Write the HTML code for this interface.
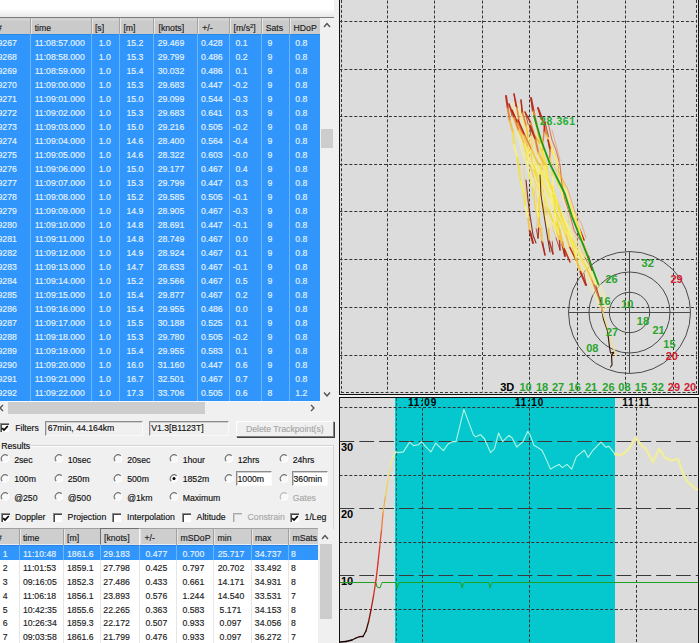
<!DOCTYPE html>
<html><head><meta charset="utf-8"><style>
html,body{margin:0;padding:0;}
body{width:700px;height:643px;position:relative;overflow:hidden;background:#f0f0f0;font-family:"Liberation Sans", sans-serif;}
.r{position:absolute;box-sizing:content-box;}
.t{position:absolute;white-space:nowrap;line-height:14px;height:14px;-webkit-text-stroke:0.15px currentColor;}
sup{font-size:6px;vertical-align:top;position:relative;top:-2px;}
</style></head><body>
<div class="r" style="left:0px;top:0px;width:339px;height:643px;background:#f0f0f0;"></div>
<div class="r" style="left:0px;top:0px;width:334px;height:10px;background:#ffffff;"></div>
<div class="r" style="left:0px;top:10px;width:334px;height:7px;background:linear-gradient(#fbfbfb,#e9e9e9);"></div>
<div class="r" style="left:0px;top:17px;width:334px;height:1px;background:#7a7a7a;"></div>
<div class="r" style="left:0px;top:18px;width:320px;height:16px;background:#cacaca;"></div>
<div class="r" style="left:0px;top:18px;width:320px;height:3px;background:#d2d2d2;"></div>
<div class="r" style="left:30px;top:18px;width:1px;height:16px;background:#a4a4a4;"></div>
<div class="r" style="left:31px;top:18px;width:1px;height:16px;background:#e6e6e6;"></div>
<div class="r" style="left:91px;top:18px;width:1px;height:16px;background:#a4a4a4;"></div>
<div class="r" style="left:92px;top:18px;width:1px;height:16px;background:#e6e6e6;"></div>
<div class="r" style="left:119px;top:18px;width:1px;height:16px;background:#a4a4a4;"></div>
<div class="r" style="left:120px;top:18px;width:1px;height:16px;background:#e6e6e6;"></div>
<div class="r" style="left:153px;top:18px;width:1px;height:16px;background:#a4a4a4;"></div>
<div class="r" style="left:154px;top:18px;width:1px;height:16px;background:#e6e6e6;"></div>
<div class="r" style="left:197px;top:18px;width:1px;height:16px;background:#a4a4a4;"></div>
<div class="r" style="left:198px;top:18px;width:1px;height:16px;background:#e6e6e6;"></div>
<div class="r" style="left:229px;top:18px;width:1px;height:16px;background:#a4a4a4;"></div>
<div class="r" style="left:230px;top:18px;width:1px;height:16px;background:#e6e6e6;"></div>
<div class="r" style="left:261px;top:18px;width:1px;height:16px;background:#a4a4a4;"></div>
<div class="r" style="left:262px;top:18px;width:1px;height:16px;background:#e6e6e6;"></div>
<div class="r" style="left:289px;top:18px;width:1px;height:16px;background:#a4a4a4;"></div>
<div class="r" style="left:290px;top:18px;width:1px;height:16px;background:#e6e6e6;"></div>
<div class="t" style="left:-3px;top:20.80px;color:#1a1a1a;font-size:8.7px;">#</div>
<div class="t" style="left:34.7px;top:20.80px;color:#1a1a1a;font-size:8.7px;">time</div>
<div class="t" style="left:94.9px;top:20.80px;color:#1a1a1a;font-size:8.7px;">[s]</div>
<div class="t" style="left:123.4px;top:20.80px;color:#1a1a1a;font-size:8.7px;">[m]</div>
<div class="t" style="left:158.5px;top:20.80px;color:#1a1a1a;font-size:8.7px;">[knots]</div>
<div class="t" style="left:202.2px;top:20.80px;color:#1a1a1a;font-size:8.7px;">+/-</div>
<div class="t" style="left:233.6px;top:20.80px;color:#1a1a1a;font-size:8.7px;">[m/s<sup>2</sup>]</div>
<div class="t" style="left:265.7px;top:20.80px;color:#1a1a1a;font-size:8.7px;">Sats</div>
<div class="t" style="left:293.5px;top:20.80px;color:#1a1a1a;font-size:8.7px;">HDoP</div>
<div class="r" style="left:0px;top:34px;width:320px;height:367px;background:#3196fc;"></div>
<div class="r" style="left:0px;top:34px;width:320px;height:1px;background:#2b86e6;"></div>
<div class="r" style="left:30px;top:34px;width:1px;height:367px;background:#6cb5ff;"></div>
<div class="r" style="left:91px;top:34px;width:1px;height:367px;background:#6cb5ff;"></div>
<div class="r" style="left:119px;top:34px;width:1px;height:367px;background:#6cb5ff;"></div>
<div class="r" style="left:153px;top:34px;width:1px;height:367px;background:#6cb5ff;"></div>
<div class="r" style="left:197px;top:34px;width:1px;height:367px;background:#6cb5ff;"></div>
<div class="r" style="left:229px;top:34px;width:1px;height:367px;background:#6cb5ff;"></div>
<div class="r" style="left:261px;top:34px;width:1px;height:367px;background:#6cb5ff;"></div>
<div class="r" style="left:289px;top:34px;width:1px;height:367px;background:#6cb5ff;"></div>
<div class="t" style="right:683.2px;top:35.60px;color:#e6f3ff;font-size:8.7px;">9267</div>
<div class="t" style="left:34.7px;top:35.60px;color:#e6f3ff;font-size:8.7px;">11:08:57.000</div>
<div class="t" style="left:98.7px;top:35.60px;color:#e6f3ff;font-size:8.7px;">1.0</div>
<div class="t" style="left:126.4px;top:35.60px;color:#e6f3ff;font-size:8.7px;">15.2</div>
<div class="t" style="left:157.7px;top:35.60px;color:#e6f3ff;font-size:8.7px;">29.469</div>
<div class="t" style="left:200.9px;top:35.60px;color:#e6f3ff;font-size:8.7px;">0.428</div>
<div class="t" style="left:235.4px;top:35.60px;color:#e6f3ff;font-size:8.7px;">0.1</div>
<div class="t" style="left:267.5px;top:35.60px;color:#e6f3ff;font-size:8.7px;">9</div>
<div class="t" style="left:295.3px;top:35.60px;color:#e6f3ff;font-size:8.7px;">0.8</div>
<div class="t" style="right:683.2px;top:49.60px;color:#e6f3ff;font-size:8.7px;">9268</div>
<div class="t" style="left:34.7px;top:49.60px;color:#e6f3ff;font-size:8.7px;">11:08:58.000</div>
<div class="t" style="left:98.7px;top:49.60px;color:#e6f3ff;font-size:8.7px;">1.0</div>
<div class="t" style="left:126.4px;top:49.60px;color:#e6f3ff;font-size:8.7px;">15.3</div>
<div class="t" style="left:157.7px;top:49.60px;color:#e6f3ff;font-size:8.7px;">29.799</div>
<div class="t" style="left:200.9px;top:49.60px;color:#e6f3ff;font-size:8.7px;">0.486</div>
<div class="t" style="left:235.4px;top:49.60px;color:#e6f3ff;font-size:8.7px;">0.2</div>
<div class="t" style="left:267.5px;top:49.60px;color:#e6f3ff;font-size:8.7px;">9</div>
<div class="t" style="left:295.3px;top:49.60px;color:#e6f3ff;font-size:8.7px;">0.8</div>
<div class="t" style="right:683.2px;top:63.60px;color:#e6f3ff;font-size:8.7px;">9269</div>
<div class="t" style="left:34.7px;top:63.60px;color:#e6f3ff;font-size:8.7px;">11:08:59.000</div>
<div class="t" style="left:98.7px;top:63.60px;color:#e6f3ff;font-size:8.7px;">1.0</div>
<div class="t" style="left:126.4px;top:63.60px;color:#e6f3ff;font-size:8.7px;">15.4</div>
<div class="t" style="left:157.7px;top:63.60px;color:#e6f3ff;font-size:8.7px;">30.032</div>
<div class="t" style="left:200.9px;top:63.60px;color:#e6f3ff;font-size:8.7px;">0.486</div>
<div class="t" style="left:235.4px;top:63.60px;color:#e6f3ff;font-size:8.7px;">0.1</div>
<div class="t" style="left:267.5px;top:63.60px;color:#e6f3ff;font-size:8.7px;">9</div>
<div class="t" style="left:295.3px;top:63.60px;color:#e6f3ff;font-size:8.7px;">0.8</div>
<div class="t" style="right:683.2px;top:77.60px;color:#e6f3ff;font-size:8.7px;">9270</div>
<div class="t" style="left:34.7px;top:77.60px;color:#e6f3ff;font-size:8.7px;">11:09:00.000</div>
<div class="t" style="left:98.7px;top:77.60px;color:#e6f3ff;font-size:8.7px;">1.0</div>
<div class="t" style="left:126.4px;top:77.60px;color:#e6f3ff;font-size:8.7px;">15.3</div>
<div class="t" style="left:157.7px;top:77.60px;color:#e6f3ff;font-size:8.7px;">29.683</div>
<div class="t" style="left:200.9px;top:77.60px;color:#e6f3ff;font-size:8.7px;">0.447</div>
<div class="t" style="right:464.4px;top:77.60px;color:#e6f3ff;font-size:8.7px;">-</div>
<div class="t" style="left:235.4px;top:77.60px;color:#e6f3ff;font-size:8.7px;">0.2</div>
<div class="t" style="left:267.5px;top:77.60px;color:#e6f3ff;font-size:8.7px;">9</div>
<div class="t" style="left:295.3px;top:77.60px;color:#e6f3ff;font-size:8.7px;">0.8</div>
<div class="t" style="right:683.2px;top:91.60px;color:#e6f3ff;font-size:8.7px;">9271</div>
<div class="t" style="left:34.7px;top:91.60px;color:#e6f3ff;font-size:8.7px;">11:09:01.000</div>
<div class="t" style="left:98.7px;top:91.60px;color:#e6f3ff;font-size:8.7px;">1.0</div>
<div class="t" style="left:126.4px;top:91.60px;color:#e6f3ff;font-size:8.7px;">15.0</div>
<div class="t" style="left:157.7px;top:91.60px;color:#e6f3ff;font-size:8.7px;">29.099</div>
<div class="t" style="left:200.9px;top:91.60px;color:#e6f3ff;font-size:8.7px;">0.544</div>
<div class="t" style="right:464.4px;top:91.60px;color:#e6f3ff;font-size:8.7px;">-</div>
<div class="t" style="left:235.4px;top:91.60px;color:#e6f3ff;font-size:8.7px;">0.3</div>
<div class="t" style="left:267.5px;top:91.60px;color:#e6f3ff;font-size:8.7px;">9</div>
<div class="t" style="left:295.3px;top:91.60px;color:#e6f3ff;font-size:8.7px;">0.8</div>
<div class="t" style="right:683.2px;top:105.60px;color:#e6f3ff;font-size:8.7px;">9272</div>
<div class="t" style="left:34.7px;top:105.60px;color:#e6f3ff;font-size:8.7px;">11:09:02.000</div>
<div class="t" style="left:98.7px;top:105.60px;color:#e6f3ff;font-size:8.7px;">1.0</div>
<div class="t" style="left:126.4px;top:105.60px;color:#e6f3ff;font-size:8.7px;">15.3</div>
<div class="t" style="left:157.7px;top:105.60px;color:#e6f3ff;font-size:8.7px;">29.683</div>
<div class="t" style="left:200.9px;top:105.60px;color:#e6f3ff;font-size:8.7px;">0.641</div>
<div class="t" style="left:235.4px;top:105.60px;color:#e6f3ff;font-size:8.7px;">0.3</div>
<div class="t" style="left:267.5px;top:105.60px;color:#e6f3ff;font-size:8.7px;">9</div>
<div class="t" style="left:295.3px;top:105.60px;color:#e6f3ff;font-size:8.7px;">0.8</div>
<div class="t" style="right:683.2px;top:119.60px;color:#e6f3ff;font-size:8.7px;">9273</div>
<div class="t" style="left:34.7px;top:119.60px;color:#e6f3ff;font-size:8.7px;">11:09:03.000</div>
<div class="t" style="left:98.7px;top:119.60px;color:#e6f3ff;font-size:8.7px;">1.0</div>
<div class="t" style="left:126.4px;top:119.60px;color:#e6f3ff;font-size:8.7px;">15.0</div>
<div class="t" style="left:157.7px;top:119.60px;color:#e6f3ff;font-size:8.7px;">29.216</div>
<div class="t" style="left:200.9px;top:119.60px;color:#e6f3ff;font-size:8.7px;">0.505</div>
<div class="t" style="right:464.4px;top:119.60px;color:#e6f3ff;font-size:8.7px;">-</div>
<div class="t" style="left:235.4px;top:119.60px;color:#e6f3ff;font-size:8.7px;">0.2</div>
<div class="t" style="left:267.5px;top:119.60px;color:#e6f3ff;font-size:8.7px;">9</div>
<div class="t" style="left:295.3px;top:119.60px;color:#e6f3ff;font-size:8.7px;">0.8</div>
<div class="t" style="right:683.2px;top:133.60px;color:#e6f3ff;font-size:8.7px;">9274</div>
<div class="t" style="left:34.7px;top:133.60px;color:#e6f3ff;font-size:8.7px;">11:09:04.000</div>
<div class="t" style="left:98.7px;top:133.60px;color:#e6f3ff;font-size:8.7px;">1.0</div>
<div class="t" style="left:126.4px;top:133.60px;color:#e6f3ff;font-size:8.7px;">14.6</div>
<div class="t" style="left:157.7px;top:133.60px;color:#e6f3ff;font-size:8.7px;">28.400</div>
<div class="t" style="left:200.9px;top:133.60px;color:#e6f3ff;font-size:8.7px;">0.564</div>
<div class="t" style="right:464.4px;top:133.60px;color:#e6f3ff;font-size:8.7px;">-</div>
<div class="t" style="left:235.4px;top:133.60px;color:#e6f3ff;font-size:8.7px;">0.4</div>
<div class="t" style="left:267.5px;top:133.60px;color:#e6f3ff;font-size:8.7px;">9</div>
<div class="t" style="left:295.3px;top:133.60px;color:#e6f3ff;font-size:8.7px;">0.8</div>
<div class="t" style="right:683.2px;top:147.60px;color:#e6f3ff;font-size:8.7px;">9275</div>
<div class="t" style="left:34.7px;top:147.60px;color:#e6f3ff;font-size:8.7px;">11:09:05.000</div>
<div class="t" style="left:98.7px;top:147.60px;color:#e6f3ff;font-size:8.7px;">1.0</div>
<div class="t" style="left:126.4px;top:147.60px;color:#e6f3ff;font-size:8.7px;">14.6</div>
<div class="t" style="left:157.7px;top:147.60px;color:#e6f3ff;font-size:8.7px;">28.322</div>
<div class="t" style="left:200.9px;top:147.60px;color:#e6f3ff;font-size:8.7px;">0.603</div>
<div class="t" style="right:464.4px;top:147.60px;color:#e6f3ff;font-size:8.7px;">-</div>
<div class="t" style="left:235.4px;top:147.60px;color:#e6f3ff;font-size:8.7px;">0.0</div>
<div class="t" style="left:267.5px;top:147.60px;color:#e6f3ff;font-size:8.7px;">9</div>
<div class="t" style="left:295.3px;top:147.60px;color:#e6f3ff;font-size:8.7px;">0.8</div>
<div class="t" style="right:683.2px;top:161.60px;color:#e6f3ff;font-size:8.7px;">9276</div>
<div class="t" style="left:34.7px;top:161.60px;color:#e6f3ff;font-size:8.7px;">11:09:06.000</div>
<div class="t" style="left:98.7px;top:161.60px;color:#e6f3ff;font-size:8.7px;">1.0</div>
<div class="t" style="left:126.4px;top:161.60px;color:#e6f3ff;font-size:8.7px;">15.0</div>
<div class="t" style="left:157.7px;top:161.60px;color:#e6f3ff;font-size:8.7px;">29.177</div>
<div class="t" style="left:200.9px;top:161.60px;color:#e6f3ff;font-size:8.7px;">0.467</div>
<div class="t" style="left:235.4px;top:161.60px;color:#e6f3ff;font-size:8.7px;">0.4</div>
<div class="t" style="left:267.5px;top:161.60px;color:#e6f3ff;font-size:8.7px;">9</div>
<div class="t" style="left:295.3px;top:161.60px;color:#e6f3ff;font-size:8.7px;">0.8</div>
<div class="t" style="right:683.2px;top:175.60px;color:#e6f3ff;font-size:8.7px;">9277</div>
<div class="t" style="left:34.7px;top:175.60px;color:#e6f3ff;font-size:8.7px;">11:09:07.000</div>
<div class="t" style="left:98.7px;top:175.60px;color:#e6f3ff;font-size:8.7px;">1.0</div>
<div class="t" style="left:126.4px;top:175.60px;color:#e6f3ff;font-size:8.7px;">15.3</div>
<div class="t" style="left:157.7px;top:175.60px;color:#e6f3ff;font-size:8.7px;">29.799</div>
<div class="t" style="left:200.9px;top:175.60px;color:#e6f3ff;font-size:8.7px;">0.447</div>
<div class="t" style="left:235.4px;top:175.60px;color:#e6f3ff;font-size:8.7px;">0.3</div>
<div class="t" style="left:267.5px;top:175.60px;color:#e6f3ff;font-size:8.7px;">9</div>
<div class="t" style="left:295.3px;top:175.60px;color:#e6f3ff;font-size:8.7px;">0.8</div>
<div class="t" style="right:683.2px;top:189.60px;color:#e6f3ff;font-size:8.7px;">9278</div>
<div class="t" style="left:34.7px;top:189.60px;color:#e6f3ff;font-size:8.7px;">11:09:08.000</div>
<div class="t" style="left:98.7px;top:189.60px;color:#e6f3ff;font-size:8.7px;">1.0</div>
<div class="t" style="left:126.4px;top:189.60px;color:#e6f3ff;font-size:8.7px;">15.2</div>
<div class="t" style="left:157.7px;top:189.60px;color:#e6f3ff;font-size:8.7px;">29.585</div>
<div class="t" style="left:200.9px;top:189.60px;color:#e6f3ff;font-size:8.7px;">0.505</div>
<div class="t" style="right:464.4px;top:189.60px;color:#e6f3ff;font-size:8.7px;">-</div>
<div class="t" style="left:235.4px;top:189.60px;color:#e6f3ff;font-size:8.7px;">0.1</div>
<div class="t" style="left:267.5px;top:189.60px;color:#e6f3ff;font-size:8.7px;">9</div>
<div class="t" style="left:295.3px;top:189.60px;color:#e6f3ff;font-size:8.7px;">0.8</div>
<div class="t" style="right:683.2px;top:203.60px;color:#e6f3ff;font-size:8.7px;">9279</div>
<div class="t" style="left:34.7px;top:203.60px;color:#e6f3ff;font-size:8.7px;">11:09:09.000</div>
<div class="t" style="left:98.7px;top:203.60px;color:#e6f3ff;font-size:8.7px;">1.0</div>
<div class="t" style="left:126.4px;top:203.60px;color:#e6f3ff;font-size:8.7px;">14.9</div>
<div class="t" style="left:157.7px;top:203.60px;color:#e6f3ff;font-size:8.7px;">28.905</div>
<div class="t" style="left:200.9px;top:203.60px;color:#e6f3ff;font-size:8.7px;">0.467</div>
<div class="t" style="right:464.4px;top:203.60px;color:#e6f3ff;font-size:8.7px;">-</div>
<div class="t" style="left:235.4px;top:203.60px;color:#e6f3ff;font-size:8.7px;">0.3</div>
<div class="t" style="left:267.5px;top:203.60px;color:#e6f3ff;font-size:8.7px;">9</div>
<div class="t" style="left:295.3px;top:203.60px;color:#e6f3ff;font-size:8.7px;">0.8</div>
<div class="t" style="right:683.2px;top:217.60px;color:#e6f3ff;font-size:8.7px;">9280</div>
<div class="t" style="left:34.7px;top:217.60px;color:#e6f3ff;font-size:8.7px;">11:09:10.000</div>
<div class="t" style="left:98.7px;top:217.60px;color:#e6f3ff;font-size:8.7px;">1.0</div>
<div class="t" style="left:126.4px;top:217.60px;color:#e6f3ff;font-size:8.7px;">14.8</div>
<div class="t" style="left:157.7px;top:217.60px;color:#e6f3ff;font-size:8.7px;">28.691</div>
<div class="t" style="left:200.9px;top:217.60px;color:#e6f3ff;font-size:8.7px;">0.447</div>
<div class="t" style="right:464.4px;top:217.60px;color:#e6f3ff;font-size:8.7px;">-</div>
<div class="t" style="left:235.4px;top:217.60px;color:#e6f3ff;font-size:8.7px;">0.1</div>
<div class="t" style="left:267.5px;top:217.60px;color:#e6f3ff;font-size:8.7px;">9</div>
<div class="t" style="left:295.3px;top:217.60px;color:#e6f3ff;font-size:8.7px;">0.8</div>
<div class="t" style="right:683.2px;top:231.60px;color:#e6f3ff;font-size:8.7px;">9281</div>
<div class="t" style="left:34.7px;top:231.60px;color:#e6f3ff;font-size:8.7px;">11:09:11.000</div>
<div class="t" style="left:98.7px;top:231.60px;color:#e6f3ff;font-size:8.7px;">1.0</div>
<div class="t" style="left:126.4px;top:231.60px;color:#e6f3ff;font-size:8.7px;">14.8</div>
<div class="t" style="left:157.7px;top:231.60px;color:#e6f3ff;font-size:8.7px;">28.749</div>
<div class="t" style="left:200.9px;top:231.60px;color:#e6f3ff;font-size:8.7px;">0.467</div>
<div class="t" style="left:235.4px;top:231.60px;color:#e6f3ff;font-size:8.7px;">0.0</div>
<div class="t" style="left:267.5px;top:231.60px;color:#e6f3ff;font-size:8.7px;">9</div>
<div class="t" style="left:295.3px;top:231.60px;color:#e6f3ff;font-size:8.7px;">0.8</div>
<div class="t" style="right:683.2px;top:245.60px;color:#e6f3ff;font-size:8.7px;">9282</div>
<div class="t" style="left:34.7px;top:245.60px;color:#e6f3ff;font-size:8.7px;">11:09:12.000</div>
<div class="t" style="left:98.7px;top:245.60px;color:#e6f3ff;font-size:8.7px;">1.0</div>
<div class="t" style="left:126.4px;top:245.60px;color:#e6f3ff;font-size:8.7px;">14.9</div>
<div class="t" style="left:157.7px;top:245.60px;color:#e6f3ff;font-size:8.7px;">28.924</div>
<div class="t" style="left:200.9px;top:245.60px;color:#e6f3ff;font-size:8.7px;">0.467</div>
<div class="t" style="left:235.4px;top:245.60px;color:#e6f3ff;font-size:8.7px;">0.1</div>
<div class="t" style="left:267.5px;top:245.60px;color:#e6f3ff;font-size:8.7px;">9</div>
<div class="t" style="left:295.3px;top:245.60px;color:#e6f3ff;font-size:8.7px;">0.8</div>
<div class="t" style="right:683.2px;top:259.60px;color:#e6f3ff;font-size:8.7px;">9283</div>
<div class="t" style="left:34.7px;top:259.60px;color:#e6f3ff;font-size:8.7px;">11:09:13.000</div>
<div class="t" style="left:98.7px;top:259.60px;color:#e6f3ff;font-size:8.7px;">1.0</div>
<div class="t" style="left:126.4px;top:259.60px;color:#e6f3ff;font-size:8.7px;">14.7</div>
<div class="t" style="left:157.7px;top:259.60px;color:#e6f3ff;font-size:8.7px;">28.633</div>
<div class="t" style="left:200.9px;top:259.60px;color:#e6f3ff;font-size:8.7px;">0.467</div>
<div class="t" style="right:464.4px;top:259.60px;color:#e6f3ff;font-size:8.7px;">-</div>
<div class="t" style="left:235.4px;top:259.60px;color:#e6f3ff;font-size:8.7px;">0.1</div>
<div class="t" style="left:267.5px;top:259.60px;color:#e6f3ff;font-size:8.7px;">9</div>
<div class="t" style="left:295.3px;top:259.60px;color:#e6f3ff;font-size:8.7px;">0.8</div>
<div class="t" style="right:683.2px;top:273.60px;color:#e6f3ff;font-size:8.7px;">9284</div>
<div class="t" style="left:34.7px;top:273.60px;color:#e6f3ff;font-size:8.7px;">11:09:14.000</div>
<div class="t" style="left:98.7px;top:273.60px;color:#e6f3ff;font-size:8.7px;">1.0</div>
<div class="t" style="left:126.4px;top:273.60px;color:#e6f3ff;font-size:8.7px;">15.2</div>
<div class="t" style="left:157.7px;top:273.60px;color:#e6f3ff;font-size:8.7px;">29.566</div>
<div class="t" style="left:200.9px;top:273.60px;color:#e6f3ff;font-size:8.7px;">0.467</div>
<div class="t" style="left:235.4px;top:273.60px;color:#e6f3ff;font-size:8.7px;">0.5</div>
<div class="t" style="left:267.5px;top:273.60px;color:#e6f3ff;font-size:8.7px;">9</div>
<div class="t" style="left:295.3px;top:273.60px;color:#e6f3ff;font-size:8.7px;">0.8</div>
<div class="t" style="right:683.2px;top:287.60px;color:#e6f3ff;font-size:8.7px;">9285</div>
<div class="t" style="left:34.7px;top:287.60px;color:#e6f3ff;font-size:8.7px;">11:09:15.000</div>
<div class="t" style="left:98.7px;top:287.60px;color:#e6f3ff;font-size:8.7px;">1.0</div>
<div class="t" style="left:126.4px;top:287.60px;color:#e6f3ff;font-size:8.7px;">15.4</div>
<div class="t" style="left:157.7px;top:287.60px;color:#e6f3ff;font-size:8.7px;">29.877</div>
<div class="t" style="left:200.9px;top:287.60px;color:#e6f3ff;font-size:8.7px;">0.467</div>
<div class="t" style="left:235.4px;top:287.60px;color:#e6f3ff;font-size:8.7px;">0.2</div>
<div class="t" style="left:267.5px;top:287.60px;color:#e6f3ff;font-size:8.7px;">9</div>
<div class="t" style="left:295.3px;top:287.60px;color:#e6f3ff;font-size:8.7px;">0.8</div>
<div class="t" style="right:683.2px;top:301.60px;color:#e6f3ff;font-size:8.7px;">9286</div>
<div class="t" style="left:34.7px;top:301.60px;color:#e6f3ff;font-size:8.7px;">11:09:16.000</div>
<div class="t" style="left:98.7px;top:301.60px;color:#e6f3ff;font-size:8.7px;">1.0</div>
<div class="t" style="left:126.4px;top:301.60px;color:#e6f3ff;font-size:8.7px;">15.4</div>
<div class="t" style="left:157.7px;top:301.60px;color:#e6f3ff;font-size:8.7px;">29.955</div>
<div class="t" style="left:200.9px;top:301.60px;color:#e6f3ff;font-size:8.7px;">0.486</div>
<div class="t" style="left:235.4px;top:301.60px;color:#e6f3ff;font-size:8.7px;">0.0</div>
<div class="t" style="left:267.5px;top:301.60px;color:#e6f3ff;font-size:8.7px;">9</div>
<div class="t" style="left:295.3px;top:301.60px;color:#e6f3ff;font-size:8.7px;">0.8</div>
<div class="t" style="right:683.2px;top:315.60px;color:#e6f3ff;font-size:8.7px;">9287</div>
<div class="t" style="left:34.7px;top:315.60px;color:#e6f3ff;font-size:8.7px;">11:09:17.000</div>
<div class="t" style="left:98.7px;top:315.60px;color:#e6f3ff;font-size:8.7px;">1.0</div>
<div class="t" style="left:126.4px;top:315.60px;color:#e6f3ff;font-size:8.7px;">15.5</div>
<div class="t" style="left:157.7px;top:315.60px;color:#e6f3ff;font-size:8.7px;">30.188</div>
<div class="t" style="left:200.9px;top:315.60px;color:#e6f3ff;font-size:8.7px;">0.525</div>
<div class="t" style="left:235.4px;top:315.60px;color:#e6f3ff;font-size:8.7px;">0.1</div>
<div class="t" style="left:267.5px;top:315.60px;color:#e6f3ff;font-size:8.7px;">9</div>
<div class="t" style="left:295.3px;top:315.60px;color:#e6f3ff;font-size:8.7px;">0.8</div>
<div class="t" style="right:683.2px;top:329.60px;color:#e6f3ff;font-size:8.7px;">9288</div>
<div class="t" style="left:34.7px;top:329.60px;color:#e6f3ff;font-size:8.7px;">11:09:18.000</div>
<div class="t" style="left:98.7px;top:329.60px;color:#e6f3ff;font-size:8.7px;">1.0</div>
<div class="t" style="left:126.4px;top:329.60px;color:#e6f3ff;font-size:8.7px;">15.3</div>
<div class="t" style="left:157.7px;top:329.60px;color:#e6f3ff;font-size:8.7px;">29.780</div>
<div class="t" style="left:200.9px;top:329.60px;color:#e6f3ff;font-size:8.7px;">0.505</div>
<div class="t" style="right:464.4px;top:329.60px;color:#e6f3ff;font-size:8.7px;">-</div>
<div class="t" style="left:235.4px;top:329.60px;color:#e6f3ff;font-size:8.7px;">0.2</div>
<div class="t" style="left:267.5px;top:329.60px;color:#e6f3ff;font-size:8.7px;">9</div>
<div class="t" style="left:295.3px;top:329.60px;color:#e6f3ff;font-size:8.7px;">0.8</div>
<div class="t" style="right:683.2px;top:343.60px;color:#e6f3ff;font-size:8.7px;">9289</div>
<div class="t" style="left:34.7px;top:343.60px;color:#e6f3ff;font-size:8.7px;">11:09:19.000</div>
<div class="t" style="left:98.7px;top:343.60px;color:#e6f3ff;font-size:8.7px;">1.0</div>
<div class="t" style="left:126.4px;top:343.60px;color:#e6f3ff;font-size:8.7px;">15.4</div>
<div class="t" style="left:157.7px;top:343.60px;color:#e6f3ff;font-size:8.7px;">29.955</div>
<div class="t" style="left:200.9px;top:343.60px;color:#e6f3ff;font-size:8.7px;">0.583</div>
<div class="t" style="left:235.4px;top:343.60px;color:#e6f3ff;font-size:8.7px;">0.1</div>
<div class="t" style="left:267.5px;top:343.60px;color:#e6f3ff;font-size:8.7px;">9</div>
<div class="t" style="left:295.3px;top:343.60px;color:#e6f3ff;font-size:8.7px;">0.8</div>
<div class="t" style="right:683.2px;top:357.60px;color:#e6f3ff;font-size:8.7px;">9290</div>
<div class="t" style="left:34.7px;top:357.60px;color:#e6f3ff;font-size:8.7px;">11:09:20.000</div>
<div class="t" style="left:98.7px;top:357.60px;color:#e6f3ff;font-size:8.7px;">1.0</div>
<div class="t" style="left:126.4px;top:357.60px;color:#e6f3ff;font-size:8.7px;">16.0</div>
<div class="t" style="left:157.7px;top:357.60px;color:#e6f3ff;font-size:8.7px;">31.160</div>
<div class="t" style="left:200.9px;top:357.60px;color:#e6f3ff;font-size:8.7px;">0.447</div>
<div class="t" style="left:235.4px;top:357.60px;color:#e6f3ff;font-size:8.7px;">0.6</div>
<div class="t" style="left:267.5px;top:357.60px;color:#e6f3ff;font-size:8.7px;">9</div>
<div class="t" style="left:295.3px;top:357.60px;color:#e6f3ff;font-size:8.7px;">0.8</div>
<div class="t" style="right:683.2px;top:371.60px;color:#e6f3ff;font-size:8.7px;">9291</div>
<div class="t" style="left:34.7px;top:371.60px;color:#e6f3ff;font-size:8.7px;">11:09:21.000</div>
<div class="t" style="left:98.7px;top:371.60px;color:#e6f3ff;font-size:8.7px;">1.0</div>
<div class="t" style="left:126.4px;top:371.60px;color:#e6f3ff;font-size:8.7px;">16.7</div>
<div class="t" style="left:157.7px;top:371.60px;color:#e6f3ff;font-size:8.7px;">32.501</div>
<div class="t" style="left:200.9px;top:371.60px;color:#e6f3ff;font-size:8.7px;">0.467</div>
<div class="t" style="left:235.4px;top:371.60px;color:#e6f3ff;font-size:8.7px;">0.7</div>
<div class="t" style="left:267.5px;top:371.60px;color:#e6f3ff;font-size:8.7px;">9</div>
<div class="t" style="left:295.3px;top:371.60px;color:#e6f3ff;font-size:8.7px;">0.8</div>
<div class="t" style="right:683.2px;top:385.60px;color:#e6f3ff;font-size:8.7px;">9292</div>
<div class="t" style="left:34.7px;top:385.60px;color:#e6f3ff;font-size:8.7px;">11:09:22.000</div>
<div class="t" style="left:98.7px;top:385.60px;color:#e6f3ff;font-size:8.7px;">1.0</div>
<div class="t" style="left:126.4px;top:385.60px;color:#e6f3ff;font-size:8.7px;">17.3</div>
<div class="t" style="left:157.7px;top:385.60px;color:#e6f3ff;font-size:8.7px;">33.706</div>
<div class="t" style="left:200.9px;top:385.60px;color:#e6f3ff;font-size:8.7px;">0.505</div>
<div class="t" style="left:235.4px;top:385.60px;color:#e6f3ff;font-size:8.7px;">0.6</div>
<div class="t" style="left:267.5px;top:385.60px;color:#e6f3ff;font-size:8.7px;">8</div>
<div class="t" style="left:295.3px;top:385.60px;color:#e6f3ff;font-size:8.7px;">1.2</div>
<div class="r" style="left:320px;top:18px;width:14px;height:383px;background:#f0f0f0;"></div>
<div class="r" style="left:321px;top:129px;width:12px;height:19px;background:#cdcdcd;"></div>
<svg class="r" style="left:320px;top:18px" width="14" height="383"><path d="M4 9 L7 5.5 L10 9" fill="none" stroke="#505050" stroke-width="1.3"/><path d="M4 374.5 L7 378 L10 374.5" fill="none" stroke="#505050" stroke-width="1.4"/></svg>
<div class="r" style="left:0px;top:401px;width:320px;height:14px;background:#f0f0f0;"></div>
<div class="r" style="left:0px;top:401px;width:320px;height:1px;background:#f4f8fc;"></div>
<div class="r" style="left:8px;top:402px;width:197px;height:12px;background:#cdcdcd;"></div>
<svg class="r" style="left:0px;top:401px" width="320" height="14"><path d="M3 4 L0 7 L3 10" fill="none" stroke="#505050" stroke-width="1.3"/><path d="M311 4 L314 7 L311 10" fill="none" stroke="#505050" stroke-width="1.3"/></svg>
<div class="r" style="left:-0.5px;top:422.5px;width:8px;height:8px;background:#ffffff;border-top:1px solid #8a8a8a;border-left:1px solid #8a8a8a;box-shadow:inset 1px 1px 0 #454545"></div>
<svg class="r" style="left:-0.5px;top:422.5px" width="10" height="10"><path d="M2.2 5.2 L4 7.1 L7.8 3" fill="none" stroke="#000" stroke-width="1.7"/></svg>
<div class="t" style="left:15.2px;top:420.80px;color:#111;font-size:8.7px;">Filters</div>
<div class="r" style="left:45px;top:421px;width:96px;height:13px;background:#f0f0f0;border-top:1px solid #8c8c8c;border-left:1px solid #8c8c8c;border-right:1px solid #fafafa;border-bottom:1px solid #fafafa;box-shadow:inset 1px 1px 0 #d0d0d0"></div>
<div class="t" style="left:47.7px;top:421.20px;color:#111;font-size:8.7px;">67min, 44.164km</div>
<div class="r" style="left:149px;top:421px;width:78px;height:13px;background:#f0f0f0;border-top:1px solid #8c8c8c;border-left:1px solid #8c8c8c;border-right:1px solid #fafafa;border-bottom:1px solid #fafafa;box-shadow:inset 1px 1px 0 #d0d0d0"></div>
<div class="t" style="left:151.2px;top:421.20px;color:#111;font-size:8.7px;">V1.3[B1123T]</div>
<div class="r" style="left:236px;top:421px;width:96px;height:14px;background:#f0f0f0;border-top:1px solid #fff;border-left:1px solid #fff;border-right:1px solid #808080;border-bottom:1px solid #808080;box-shadow:1px 1px 0 #404040"></div>
<div class="t" style="left:246px;top:421.50px;color:#a6a6a6;font-size:8.7px;">Delete Trackpoint(s)</div>
<div class="t" style="left:1.2px;top:439.00px;color:#111;font-size:8.7px;">Results</div>
<div class="r" style="left:30px;top:445px;width:303px;height:1px;background:#d5d5d5;"></div>
<div class="r" style="left:30px;top:446px;width:303px;height:1px;background:#ffffff;"></div>
<div class="r" style="left:333px;top:445px;width:1px;height:84px;background:#d5d5d5;"></div>
<svg class="r" style="left:0px;top:453.1px" width="11" height="11"><circle cx="5" cy="5.5" r="3.9" fill="#f8f8f8" stroke="#ffffff" stroke-width="1"/><path d="M2.2 8.2 A3.9 3.9 0 0 1 7.8 2.8" fill="none" stroke="#707070" stroke-width="1.1"/></svg>
<div class="t" style="left:14.2px;top:452.60px;color:#111;font-size:8.7px;">2sec</div>
<svg class="r" style="left:53.5px;top:453.1px" width="11" height="11"><circle cx="5" cy="5.5" r="3.9" fill="#f8f8f8" stroke="#ffffff" stroke-width="1"/><path d="M2.2 8.2 A3.9 3.9 0 0 1 7.8 2.8" fill="none" stroke="#707070" stroke-width="1.1"/></svg>
<div class="t" style="left:67.7px;top:452.60px;color:#111;font-size:8.7px;">10sec</div>
<svg class="r" style="left:113px;top:453.1px" width="11" height="11"><circle cx="5" cy="5.5" r="3.9" fill="#f8f8f8" stroke="#ffffff" stroke-width="1"/><path d="M2.2 8.2 A3.9 3.9 0 0 1 7.8 2.8" fill="none" stroke="#707070" stroke-width="1.1"/></svg>
<div class="t" style="left:127.2px;top:452.60px;color:#111;font-size:8.7px;">20sec</div>
<svg class="r" style="left:168.5px;top:453.1px" width="11" height="11"><circle cx="5" cy="5.5" r="3.9" fill="#f8f8f8" stroke="#ffffff" stroke-width="1"/><path d="M2.2 8.2 A3.9 3.9 0 0 1 7.8 2.8" fill="none" stroke="#707070" stroke-width="1.1"/></svg>
<div class="t" style="left:182.7px;top:452.60px;color:#111;font-size:8.7px;">1hour</div>
<svg class="r" style="left:223.5px;top:453.1px" width="11" height="11"><circle cx="5" cy="5.5" r="3.9" fill="#f8f8f8" stroke="#ffffff" stroke-width="1"/><path d="M2.2 8.2 A3.9 3.9 0 0 1 7.8 2.8" fill="none" stroke="#707070" stroke-width="1.1"/></svg>
<div class="t" style="left:237.7px;top:452.60px;color:#111;font-size:8.7px;">12hrs</div>
<svg class="r" style="left:278.5px;top:453.1px" width="11" height="11"><circle cx="5" cy="5.5" r="3.9" fill="#f8f8f8" stroke="#ffffff" stroke-width="1"/><path d="M2.2 8.2 A3.9 3.9 0 0 1 7.8 2.8" fill="none" stroke="#707070" stroke-width="1.1"/></svg>
<div class="t" style="left:292.7px;top:452.60px;color:#111;font-size:8.7px;">24hrs</div>
<svg class="r" style="left:0px;top:472.5px" width="11" height="11"><circle cx="5" cy="5.5" r="3.9" fill="#f8f8f8" stroke="#ffffff" stroke-width="1"/><path d="M2.2 8.2 A3.9 3.9 0 0 1 7.8 2.8" fill="none" stroke="#707070" stroke-width="1.1"/></svg>
<div class="t" style="left:14.2px;top:472.00px;color:#111;font-size:8.7px;">100m</div>
<svg class="r" style="left:53.5px;top:472.5px" width="11" height="11"><circle cx="5" cy="5.5" r="3.9" fill="#f8f8f8" stroke="#ffffff" stroke-width="1"/><path d="M2.2 8.2 A3.9 3.9 0 0 1 7.8 2.8" fill="none" stroke="#707070" stroke-width="1.1"/></svg>
<div class="t" style="left:67.7px;top:472.00px;color:#111;font-size:8.7px;">250m</div>
<svg class="r" style="left:113px;top:472.5px" width="11" height="11"><circle cx="5" cy="5.5" r="3.9" fill="#f8f8f8" stroke="#ffffff" stroke-width="1"/><path d="M2.2 8.2 A3.9 3.9 0 0 1 7.8 2.8" fill="none" stroke="#707070" stroke-width="1.1"/></svg>
<div class="t" style="left:127.2px;top:472.00px;color:#111;font-size:8.7px;">500m</div>
<svg class="r" style="left:168.5px;top:472.5px" width="11" height="11"><circle cx="5" cy="5.5" r="3.9" fill="#f8f8f8" stroke="#ffffff" stroke-width="1"/><path d="M2.2 8.2 A3.9 3.9 0 0 1 7.8 2.8" fill="none" stroke="#707070" stroke-width="1.1"/><circle cx="5" cy="5.5" r="1.5" fill="#000"/></svg>
<div class="t" style="left:182.7px;top:472.00px;color:#111;font-size:8.7px;">1852m</div>
<svg class="r" style="left:223.5px;top:472.5px" width="11" height="11"><circle cx="5" cy="5.5" r="3.9" fill="#f8f8f8" stroke="#ffffff" stroke-width="1"/><path d="M2.2 8.2 A3.9 3.9 0 0 1 7.8 2.8" fill="none" stroke="#707070" stroke-width="1.1"/></svg>
<svg class="r" style="left:278.5px;top:472.5px" width="11" height="11"><circle cx="5" cy="5.5" r="3.9" fill="#f8f8f8" stroke="#ffffff" stroke-width="1"/><path d="M2.2 8.2 A3.9 3.9 0 0 1 7.8 2.8" fill="none" stroke="#707070" stroke-width="1.1"/></svg>
<svg class="r" style="left:0px;top:491.4px" width="11" height="11"><circle cx="5" cy="5.5" r="3.9" fill="#f8f8f8" stroke="#ffffff" stroke-width="1"/><path d="M2.2 8.2 A3.9 3.9 0 0 1 7.8 2.8" fill="none" stroke="#707070" stroke-width="1.1"/></svg>
<div class="t" style="left:14.2px;top:490.90px;color:#111;font-size:8.7px;">@250</div>
<svg class="r" style="left:53.5px;top:491.4px" width="11" height="11"><circle cx="5" cy="5.5" r="3.9" fill="#f8f8f8" stroke="#ffffff" stroke-width="1"/><path d="M2.2 8.2 A3.9 3.9 0 0 1 7.8 2.8" fill="none" stroke="#707070" stroke-width="1.1"/></svg>
<div class="t" style="left:67.7px;top:490.90px;color:#111;font-size:8.7px;">@500</div>
<svg class="r" style="left:113px;top:491.4px" width="11" height="11"><circle cx="5" cy="5.5" r="3.9" fill="#f8f8f8" stroke="#ffffff" stroke-width="1"/><path d="M2.2 8.2 A3.9 3.9 0 0 1 7.8 2.8" fill="none" stroke="#707070" stroke-width="1.1"/></svg>
<div class="t" style="left:127.2px;top:490.90px;color:#111;font-size:8.7px;">@1km</div>
<svg class="r" style="left:168.5px;top:491.4px" width="11" height="11"><circle cx="5" cy="5.5" r="3.9" fill="#f8f8f8" stroke="#ffffff" stroke-width="1"/><path d="M2.2 8.2 A3.9 3.9 0 0 1 7.8 2.8" fill="none" stroke="#707070" stroke-width="1.1"/></svg>
<div class="t" style="left:182.7px;top:490.90px;color:#111;font-size:8.7px;">Maximum</div>
<svg class="r" style="left:278.5px;top:491.4px" width="11" height="11"><circle cx="5" cy="5.5" r="3.9" fill="#f8f8f8" stroke="#ffffff" stroke-width="1"/><path d="M2.2 8.2 A3.9 3.9 0 0 1 7.8 2.8" fill="none" stroke="#b8b8b8" stroke-width="1.1"/></svg>
<div class="t" style="left:292.7px;top:490.90px;color:#a8a8a8;font-size:8.7px;">Gates</div>
<div class="r" style="left:236px;top:471px;width:34px;height:13px;background:#ffffff;border-top:1px solid #8c8c8c;border-left:1px solid #8c8c8c;border-right:1px solid #fafafa;border-bottom:1px solid #fafafa;box-shadow:inset 1px 1px 0 #d0d0d0"></div>
<div class="t" style="left:237.5px;top:471.80px;color:#111;font-size:8.7px;">1000m</div>
<div class="r" style="left:292px;top:471px;width:34px;height:13px;background:#ffffff;border-top:1px solid #8c8c8c;border-left:1px solid #8c8c8c;border-right:1px solid #fafafa;border-bottom:1px solid #fafafa;box-shadow:inset 1px 1px 0 #d0d0d0"></div>
<div class="t" style="left:293.5px;top:471.80px;color:#111;font-size:8.7px;">360min</div>
<div class="r" style="left:0.5px;top:512.8px;width:8px;height:8px;background:#ffffff;border-top:1px solid #8a8a8a;border-left:1px solid #8a8a8a;box-shadow:inset 1px 1px 0 #454545"></div>
<svg class="r" style="left:0.5px;top:512.8px" width="10" height="10"><path d="M2.2 5.2 L4 7.1 L7.8 3" fill="none" stroke="#000" stroke-width="1.7"/></svg>
<div class="t" style="left:15.1px;top:510.30px;color:#111;font-size:8.7px;">Doppler</div>
<div class="r" style="left:53px;top:512.8px;width:8px;height:8px;background:#ffffff;border-top:1px solid #8a8a8a;border-left:1px solid #8a8a8a;box-shadow:inset 1px 1px 0 #454545"></div>
<div class="t" style="left:67.6px;top:510.30px;color:#111;font-size:8.7px;">Projection</div>
<div class="r" style="left:112.4px;top:512.8px;width:8px;height:8px;background:#ffffff;border-top:1px solid #8a8a8a;border-left:1px solid #8a8a8a;box-shadow:inset 1px 1px 0 #454545"></div>
<div class="t" style="left:127.0px;top:510.30px;color:#111;font-size:8.7px;">Interpolation</div>
<div class="r" style="left:182px;top:512.8px;width:8px;height:8px;background:#ffffff;border-top:1px solid #8a8a8a;border-left:1px solid #8a8a8a;box-shadow:inset 1px 1px 0 #454545"></div>
<div class="t" style="left:196.6px;top:510.30px;color:#111;font-size:8.7px;">Altitude</div>
<div class="r" style="left:233px;top:512.8px;width:8px;height:8px;background:#f0f0f0;border-top:1px solid #a8a8a8;border-left:1px solid #a8a8a8;box-shadow:inset 1px 1px 0 #d0d0d0"></div>
<div class="t" style="left:247.6px;top:510.30px;color:#a8a8a8;font-size:8.7px;">Constrain</div>
<div class="r" style="left:290px;top:512.8px;width:8px;height:8px;background:#ffffff;border-top:1px solid #8a8a8a;border-left:1px solid #8a8a8a;box-shadow:inset 1px 1px 0 #454545"></div>
<svg class="r" style="left:290px;top:512.8px" width="10" height="10"><path d="M2.2 5.2 L4 7.1 L7.8 3" fill="none" stroke="#000" stroke-width="1.7"/></svg>
<div class="t" style="left:304.6px;top:510.30px;color:#111;font-size:8.7px;">1/Leg</div>
<div class="r" style="left:0px;top:528px;width:318px;height:1px;background:#a0a0a0;"></div>
<div class="r" style="left:0px;top:529px;width:318px;height:16px;background:#cecece;"></div>
<div class="r" style="left:0px;top:544px;width:318px;height:1px;background:#e8eef6;"></div>
<div class="r" style="left:19px;top:529px;width:1px;height:16px;background:#a0a0a0;"></div>
<div class="r" style="left:20px;top:529px;width:1px;height:16px;background:#e6e6e6;"></div>
<div class="r" style="left:63px;top:529px;width:1px;height:16px;background:#a0a0a0;"></div>
<div class="r" style="left:64px;top:529px;width:1px;height:16px;background:#e6e6e6;"></div>
<div class="r" style="left:100px;top:529px;width:1px;height:16px;background:#a0a0a0;"></div>
<div class="r" style="left:101px;top:529px;width:1px;height:16px;background:#e6e6e6;"></div>
<div class="r" style="left:139px;top:529px;width:1px;height:16px;background:#a0a0a0;"></div>
<div class="r" style="left:140px;top:529px;width:1px;height:16px;background:#e6e6e6;"></div>
<div class="r" style="left:176px;top:529px;width:1px;height:16px;background:#a0a0a0;"></div>
<div class="r" style="left:177px;top:529px;width:1px;height:16px;background:#e6e6e6;"></div>
<div class="r" style="left:213px;top:529px;width:1px;height:16px;background:#a0a0a0;"></div>
<div class="r" style="left:214px;top:529px;width:1px;height:16px;background:#e6e6e6;"></div>
<div class="r" style="left:251px;top:529px;width:1px;height:16px;background:#a0a0a0;"></div>
<div class="r" style="left:252px;top:529px;width:1px;height:16px;background:#e6e6e6;"></div>
<div class="r" style="left:288px;top:529px;width:1px;height:16px;background:#a0a0a0;"></div>
<div class="r" style="left:289px;top:529px;width:1px;height:16px;background:#e6e6e6;"></div>
<div class="r" style="left:100px;top:528px;width:38px;height:15px;background:#d4d4d4;border-top:1px solid #707070;border-left:1px solid #707070;border-right:1px solid #f4f4f4;border-bottom:1px solid #e0e0e0"></div>
<div class="t" style="left:-3px;top:531.00px;color:#1a1a1a;font-size:8.7px;">#</div>
<div class="t" style="left:22.9px;top:531.00px;color:#1a1a1a;font-size:8.7px;">time</div>
<div class="t" style="left:67px;top:531.00px;color:#1a1a1a;font-size:8.7px;">[m]</div>
<div class="t" style="left:104px;top:531.00px;color:#1a1a1a;font-size:8.7px;">[knots]</div>
<div class="t" style="left:144.5px;top:531.00px;color:#1a1a1a;font-size:8.7px;">+/-</div>
<div class="t" style="left:180.5px;top:531.00px;color:#1a1a1a;font-size:8.7px;">mSDoP</div>
<div class="t" style="left:217.5px;top:531.00px;color:#1a1a1a;font-size:8.7px;">min</div>
<div class="t" style="left:255px;top:531.00px;color:#1a1a1a;font-size:8.7px;">max</div>
<div class="t" style="left:292.5px;top:531.00px;color:#1a1a1a;font-size:8.7px;">mSats</div>
<div class="r" style="left:0px;top:545px;width:318px;height:98px;background:#ffffff;"></div>
<div class="r" style="left:0px;top:545px;width:318px;height:15px;background:#3196fc;"></div>
<div class="r" style="left:0px;top:545px;width:318px;height:1px;background:#2b80e0;"></div>
<div class="r" style="left:19px;top:545px;width:1px;height:98px;background:#e6e6e6;"></div>
<div class="r" style="left:63px;top:545px;width:1px;height:98px;background:#e6e6e6;"></div>
<div class="r" style="left:100px;top:545px;width:1px;height:98px;background:#e6e6e6;"></div>
<div class="r" style="left:139px;top:545px;width:1px;height:98px;background:#e6e6e6;"></div>
<div class="r" style="left:176px;top:545px;width:1px;height:98px;background:#e6e6e6;"></div>
<div class="r" style="left:213px;top:545px;width:1px;height:98px;background:#e6e6e6;"></div>
<div class="r" style="left:251px;top:545px;width:1px;height:98px;background:#e6e6e6;"></div>
<div class="r" style="left:288px;top:545px;width:1px;height:98px;background:#e6e6e6;"></div>
<div class="r" style="left:19px;top:545px;width:1px;height:15px;background:#6cb5ff;"></div>
<div class="r" style="left:63px;top:545px;width:1px;height:15px;background:#6cb5ff;"></div>
<div class="r" style="left:100px;top:545px;width:1px;height:15px;background:#6cb5ff;"></div>
<div class="r" style="left:139px;top:545px;width:1px;height:15px;background:#6cb5ff;"></div>
<div class="r" style="left:176px;top:545px;width:1px;height:15px;background:#6cb5ff;"></div>
<div class="r" style="left:213px;top:545px;width:1px;height:15px;background:#6cb5ff;"></div>
<div class="r" style="left:251px;top:545px;width:1px;height:15px;background:#6cb5ff;"></div>
<div class="r" style="left:288px;top:545px;width:1px;height:15px;background:#6cb5ff;"></div>
<div class="t" style="left:2.7px;top:547.10px;color:#e6f3ff;font-size:8.7px;">1</div>
<div class="t" style="left:22.9px;top:547.10px;color:#e6f3ff;font-size:8.7px;">11:10:48</div>
<div class="t" style="left:67px;top:547.10px;color:#e6f3ff;font-size:8.7px;">1861.6</div>
<div class="t" style="left:103.3px;top:547.10px;color:#e6f3ff;font-size:8.7px;">29.183</div>
<div class="t" style="left:145.5px;top:547.10px;color:#e6f3ff;font-size:8.7px;">0.477</div>
<div class="t" style="left:182.5px;top:547.10px;color:#e6f3ff;font-size:8.7px;">0.700</div>
<div class="t" style="left:217.7px;top:547.10px;color:#e6f3ff;font-size:8.7px;">25.717</div>
<div class="t" style="left:254.8px;top:547.10px;color:#e6f3ff;font-size:8.7px;">34.737</div>
<div class="t" style="left:291.0px;top:547.10px;color:#e6f3ff;font-size:8.7px;">8</div>
<div class="t" style="left:2.7px;top:560.95px;color:#222;font-size:8.7px;">2</div>
<div class="t" style="left:22.9px;top:560.95px;color:#222;font-size:8.7px;">11:01:53</div>
<div class="t" style="left:67px;top:560.95px;color:#222;font-size:8.7px;">1859.1</div>
<div class="t" style="left:103.3px;top:560.95px;color:#222;font-size:8.7px;">27.798</div>
<div class="t" style="left:145.5px;top:560.95px;color:#222;font-size:8.7px;">0.425</div>
<div class="t" style="left:182.5px;top:560.95px;color:#222;font-size:8.7px;">0.797</div>
<div class="t" style="left:217.7px;top:560.95px;color:#222;font-size:8.7px;">20.702</div>
<div class="t" style="left:254.8px;top:560.95px;color:#222;font-size:8.7px;">33.492</div>
<div class="t" style="left:291.0px;top:560.95px;color:#222;font-size:8.7px;">8</div>
<div class="t" style="left:2.7px;top:574.80px;color:#222;font-size:8.7px;">3</div>
<div class="t" style="left:22.9px;top:574.80px;color:#222;font-size:8.7px;">09:16:05</div>
<div class="t" style="left:67px;top:574.80px;color:#222;font-size:8.7px;">1852.3</div>
<div class="t" style="left:103.3px;top:574.80px;color:#222;font-size:8.7px;">27.486</div>
<div class="t" style="left:145.5px;top:574.80px;color:#222;font-size:8.7px;">0.433</div>
<div class="t" style="left:182.5px;top:574.80px;color:#222;font-size:8.7px;">0.661</div>
<div class="t" style="left:217.7px;top:574.80px;color:#222;font-size:8.7px;">14.171</div>
<div class="t" style="left:254.8px;top:574.80px;color:#222;font-size:8.7px;">34.931</div>
<div class="t" style="left:291.0px;top:574.80px;color:#222;font-size:8.7px;">8</div>
<div class="t" style="left:2.7px;top:588.65px;color:#222;font-size:8.7px;">4</div>
<div class="t" style="left:22.9px;top:588.65px;color:#222;font-size:8.7px;">11:06:18</div>
<div class="t" style="left:67px;top:588.65px;color:#222;font-size:8.7px;">1856.1</div>
<div class="t" style="left:103.3px;top:588.65px;color:#222;font-size:8.7px;">23.893</div>
<div class="t" style="left:145.5px;top:588.65px;color:#222;font-size:8.7px;">0.576</div>
<div class="t" style="left:182.5px;top:588.65px;color:#222;font-size:8.7px;">1.244</div>
<div class="t" style="left:217.7px;top:588.65px;color:#222;font-size:8.7px;">14.540</div>
<div class="t" style="left:254.8px;top:588.65px;color:#222;font-size:8.7px;">33.531</div>
<div class="t" style="left:291.0px;top:588.65px;color:#222;font-size:8.7px;">7</div>
<div class="t" style="left:2.7px;top:602.50px;color:#222;font-size:8.7px;">5</div>
<div class="t" style="left:22.9px;top:602.50px;color:#222;font-size:8.7px;">10:42:35</div>
<div class="t" style="left:67px;top:602.50px;color:#222;font-size:8.7px;">1855.6</div>
<div class="t" style="left:103.3px;top:602.50px;color:#222;font-size:8.7px;">22.265</div>
<div class="t" style="left:145.5px;top:602.50px;color:#222;font-size:8.7px;">0.363</div>
<div class="t" style="left:182.5px;top:602.50px;color:#222;font-size:8.7px;">0.583</div>
<div class="t" style="left:219.6px;top:602.50px;color:#222;font-size:8.7px;">5.171</div>
<div class="t" style="left:254.8px;top:602.50px;color:#222;font-size:8.7px;">34.153</div>
<div class="t" style="left:291.0px;top:602.50px;color:#222;font-size:8.7px;">8</div>
<div class="t" style="left:2.7px;top:616.35px;color:#222;font-size:8.7px;">6</div>
<div class="t" style="left:22.9px;top:616.35px;color:#222;font-size:8.7px;">10:26:34</div>
<div class="t" style="left:67px;top:616.35px;color:#222;font-size:8.7px;">1859.3</div>
<div class="t" style="left:103.3px;top:616.35px;color:#222;font-size:8.7px;">22.172</div>
<div class="t" style="left:145.5px;top:616.35px;color:#222;font-size:8.7px;">0.507</div>
<div class="t" style="left:182.5px;top:616.35px;color:#222;font-size:8.7px;">0.933</div>
<div class="t" style="left:219.6px;top:616.35px;color:#222;font-size:8.7px;">0.097</div>
<div class="t" style="left:254.8px;top:616.35px;color:#222;font-size:8.7px;">34.056</div>
<div class="t" style="left:291.0px;top:616.35px;color:#222;font-size:8.7px;">8</div>
<div class="t" style="left:2.7px;top:630.20px;color:#222;font-size:8.7px;">7</div>
<div class="t" style="left:22.9px;top:630.20px;color:#222;font-size:8.7px;">09:03:58</div>
<div class="t" style="left:67px;top:630.20px;color:#222;font-size:8.7px;">1861.6</div>
<div class="t" style="left:103.3px;top:630.20px;color:#222;font-size:8.7px;">21.799</div>
<div class="t" style="left:145.5px;top:630.20px;color:#222;font-size:8.7px;">0.476</div>
<div class="t" style="left:182.5px;top:630.20px;color:#222;font-size:8.7px;">0.933</div>
<div class="t" style="left:219.6px;top:630.20px;color:#222;font-size:8.7px;">0.097</div>
<div class="t" style="left:254.8px;top:630.20px;color:#222;font-size:8.7px;">36.272</div>
<div class="t" style="left:291.0px;top:630.20px;color:#222;font-size:8.7px;">7</div>
<div class="r" style="left:318px;top:529px;width:14px;height:114px;background:#f0f0f0;"></div>
<div class="r" style="left:319.5px;top:544px;width:12px;height:75px;background:#cdcdcd;"></div>
<svg class="r" style="left:318px;top:529px" width="14" height="16"><path d="M4 10 L7 6.5 L10 10" fill="none" stroke="#505050" stroke-width="1.3"/></svg>
<svg class="r" style="left:0;top:0" width="700" height="643">
<rect x="339" y="0" width="361" height="643" fill="#f0f0f0"/>
<rect x="339" y="0" width="360" height="395" fill="#dcdcdc"/>
<rect x="339" y="0" width="1" height="395" fill="#111"/>
<rect x="698" y="0" width="1" height="395" fill="#111"/>
<rect x="339" y="394" width="360" height="1" fill="#111"/>
<line x1="341.5" y1="0" x2="341.5" y2="393" stroke="#333" stroke-width="1" stroke-dasharray="2.97 1.98"/>
<line x1="696.5" y1="0" x2="696.5" y2="393" stroke="#333" stroke-width="1" stroke-dasharray="2.97 1.98"/>
<line x1="341" y1="392.5" x2="697" y2="392.5" stroke="#333" stroke-width="1" stroke-dasharray="2.97 1.98"/>
<line x1="387.5" y1="0.6" x2="387.5" y2="392" stroke="#333" stroke-width="1" stroke-dasharray="2.97 1.98"/>
<line x1="434.5" y1="0.6" x2="434.5" y2="392" stroke="#333" stroke-width="1" stroke-dasharray="2.97 1.98"/>
<line x1="482.5" y1="0.6" x2="482.5" y2="392" stroke="#333" stroke-width="1" stroke-dasharray="2.97 1.98"/>
<line x1="529.5" y1="0.6" x2="529.5" y2="392" stroke="#333" stroke-width="1" stroke-dasharray="2.97 1.98"/>
<line x1="577.5" y1="0.6" x2="577.5" y2="392" stroke="#333" stroke-width="1" stroke-dasharray="2.97 1.98"/>
<line x1="625.5" y1="0.6" x2="625.5" y2="392" stroke="#333" stroke-width="1" stroke-dasharray="2.97 1.98"/>
<line x1="673.5" y1="0.6" x2="673.5" y2="392" stroke="#333" stroke-width="1" stroke-dasharray="2.97 1.98"/>
<line x1="339.45" y1="21.5" x2="697" y2="21.5" stroke="#333" stroke-width="1" stroke-dasharray="2.97 1.98"/>
<line x1="339.45" y1="69.5" x2="697" y2="69.5" stroke="#333" stroke-width="1" stroke-dasharray="2.97 1.98"/>
<line x1="339.45" y1="116.5" x2="697" y2="116.5" stroke="#333" stroke-width="1" stroke-dasharray="2.97 1.98"/>
<line x1="339.45" y1="164.5" x2="697" y2="164.5" stroke="#333" stroke-width="1" stroke-dasharray="2.97 1.98"/>
<line x1="339.45" y1="211.5" x2="697" y2="211.5" stroke="#333" stroke-width="1" stroke-dasharray="2.97 1.98"/>
<line x1="339.45" y1="259.5" x2="697" y2="259.5" stroke="#333" stroke-width="1" stroke-dasharray="2.97 1.98"/>
<line x1="339.45" y1="307.5" x2="697" y2="307.5" stroke="#333" stroke-width="1" stroke-dasharray="2.97 1.98"/>
<line x1="339.45" y1="355.5" x2="697" y2="355.5" stroke="#333" stroke-width="1" stroke-dasharray="2.97 1.98"/>
<circle cx="629.5" cy="312.5" r="61" fill="none" stroke="#4a4a4a" stroke-width="1"/>
<circle cx="629.5" cy="312.5" r="40.5" fill="none" stroke="#4a4a4a" stroke-width="1"/>
<circle cx="629.5" cy="312.5" r="20.2" fill="none" stroke="#4a4a4a" stroke-width="1"/>
<line x1="568.5" y1="312.5" x2="690.5" y2="312.5" stroke="#4a4a4a" stroke-width="1"/>
<line x1="629.5" y1="251.5" x2="629.5" y2="373.5" stroke="#4a4a4a" stroke-width="1"/>
<polyline points="514.0,108.0 530.0,160.0 548.0,210.0 570.0,248.0 592.0,278.0 604.0,305.0" fill="none" stroke="#f6efa8" stroke-width="12" stroke-opacity="0.45" stroke-linejoin="round" stroke-linecap="round"/>
<polyline points="522.0,112.0 540.0,165.0 558.0,212.0 578.0,250.0 596.0,285.0" fill="none" stroke="#f5ea80" stroke-width="6" stroke-opacity="0.45" stroke-linejoin="round" stroke-linecap="round"/>
<polyline points="506.0,96.0 507.8,108.2" fill="none" stroke="#b82818" stroke-width="2.0" stroke-opacity="0.95" stroke-linejoin="round" stroke-linecap="round"/>
<polyline points="507.8,108.2 509.7,120.5" fill="none" stroke="#e08038" stroke-width="2.0" stroke-opacity="0.95" stroke-linejoin="round" stroke-linecap="round"/>
<polyline points="509.7,120.5 513.1,132.8" fill="none" stroke="#f0c040" stroke-width="2.0" stroke-opacity="0.95" stroke-linejoin="round" stroke-linecap="round"/>
<polyline points="513.1,132.8 514.0,145.0" fill="none" stroke="#f4e040" stroke-width="2.0" stroke-opacity="0.95" stroke-linejoin="round" stroke-linecap="round"/>
<polyline points="514.0,145.0 517.3,157.2" fill="none" stroke="#faf080" stroke-width="2.0" stroke-opacity="0.95" stroke-linejoin="round" stroke-linecap="round"/>
<polyline points="517.3,157.2 519.2,169.5" fill="none" stroke="#f4e040" stroke-width="2.0" stroke-opacity="0.95" stroke-linejoin="round" stroke-linecap="round"/>
<polyline points="519.2,169.5 520.7,181.8" fill="none" stroke="#f4e040" stroke-width="2.0" stroke-opacity="0.95" stroke-linejoin="round" stroke-linecap="round"/>
<polyline points="520.7,181.8 524.0,194.0" fill="none" stroke="#f8ec50" stroke-width="2.0" stroke-opacity="0.95" stroke-linejoin="round" stroke-linecap="round"/>
<polyline points="524.0,194.0 525.1,206.2" fill="none" stroke="#f4e040" stroke-width="2.0" stroke-opacity="0.95" stroke-linejoin="round" stroke-linecap="round"/>
<polyline points="525.1,206.2 528.3,218.5" fill="none" stroke="#faf080" stroke-width="2.0" stroke-opacity="0.95" stroke-linejoin="round" stroke-linecap="round"/>
<polyline points="528.3,218.5 529.7,230.8" fill="none" stroke="#f0c040" stroke-width="2.0" stroke-opacity="0.95" stroke-linejoin="round" stroke-linecap="round"/>
<polyline points="529.7,230.8 533.0,243.0" fill="none" stroke="#b82818" stroke-width="2.0" stroke-opacity="0.95" stroke-linejoin="round" stroke-linecap="round"/>
<polyline points="533.0,243.0 530.3,230.6" fill="none" stroke="#a02818" stroke-width="1.0" stroke-opacity="0.75" stroke-linejoin="round" stroke-linecap="round"/>
<polyline points="530.3,230.6 529.2,218.2" fill="none" stroke="#f4e090" stroke-width="1.0" stroke-opacity="0.75" stroke-linejoin="round" stroke-linecap="round"/>
<polyline points="529.2,218.2 528.4,205.8" fill="none" stroke="#eec060" stroke-width="1.0" stroke-opacity="0.75" stroke-linejoin="round" stroke-linecap="round"/>
<polyline points="528.4,205.8 525.8,193.3" fill="none" stroke="#f0d070" stroke-width="1.0" stroke-opacity="0.75" stroke-linejoin="round" stroke-linecap="round"/>
<polyline points="525.8,193.3 524.9,180.9" fill="none" stroke="#f0d070" stroke-width="1.0" stroke-opacity="0.75" stroke-linejoin="round" stroke-linecap="round"/>
<polyline points="524.9,180.9 523.6,168.5" fill="none" stroke="#f0d070" stroke-width="1.0" stroke-opacity="0.75" stroke-linejoin="round" stroke-linecap="round"/>
<polyline points="523.6,168.5 522.1,156.1" fill="none" stroke="#f4e090" stroke-width="1.0" stroke-opacity="0.75" stroke-linejoin="round" stroke-linecap="round"/>
<polyline points="522.1,156.1 520.5,143.7" fill="none" stroke="#f8ec98" stroke-width="1.0" stroke-opacity="0.75" stroke-linejoin="round" stroke-linecap="round"/>
<polyline points="520.5,143.7 519.2,131.2" fill="none" stroke="#f8ec98" stroke-width="1.0" stroke-opacity="0.75" stroke-linejoin="round" stroke-linecap="round"/>
<polyline points="519.2,131.2 516.2,118.8" fill="none" stroke="#eec060" stroke-width="1.0" stroke-opacity="0.75" stroke-linejoin="round" stroke-linecap="round"/>
<polyline points="516.2,118.8 515.8,106.4" fill="none" stroke="#f8ec98" stroke-width="1.0" stroke-opacity="0.75" stroke-linejoin="round" stroke-linecap="round"/>
<polyline points="515.8,106.4 514.0,94.0" fill="none" stroke="#a02818" stroke-width="1.0" stroke-opacity="0.75" stroke-linejoin="round" stroke-linecap="round"/>
<polyline points="514.0,94.0 516.8,107.4" fill="none" stroke="#b82818" stroke-width="1.5" stroke-opacity="0.95" stroke-linejoin="round" stroke-linecap="round"/>
<polyline points="516.8,107.4 519.1,120.8" fill="none" stroke="#e08038" stroke-width="1.5" stroke-opacity="0.95" stroke-linejoin="round" stroke-linecap="round"/>
<polyline points="519.1,120.8 521.3,134.2" fill="none" stroke="#f0c040" stroke-width="1.5" stroke-opacity="0.95" stroke-linejoin="round" stroke-linecap="round"/>
<polyline points="521.3,134.2 525.0,147.7" fill="none" stroke="#f4e040" stroke-width="1.5" stroke-opacity="0.95" stroke-linejoin="round" stroke-linecap="round"/>
<polyline points="525.0,147.7 527.4,161.1" fill="none" stroke="#f4e040" stroke-width="1.5" stroke-opacity="0.95" stroke-linejoin="round" stroke-linecap="round"/>
<polyline points="527.4,161.1 528.9,174.5" fill="none" stroke="#faf080" stroke-width="1.5" stroke-opacity="0.95" stroke-linejoin="round" stroke-linecap="round"/>
<polyline points="528.9,174.5 532.3,187.9" fill="none" stroke="#f8ec50" stroke-width="1.5" stroke-opacity="0.95" stroke-linejoin="round" stroke-linecap="round"/>
<polyline points="532.3,187.9 534.7,201.3" fill="none" stroke="#f2dc30" stroke-width="1.5" stroke-opacity="0.95" stroke-linejoin="round" stroke-linecap="round"/>
<polyline points="534.7,201.3 538.2,214.8" fill="none" stroke="#f8ec50" stroke-width="1.5" stroke-opacity="0.95" stroke-linejoin="round" stroke-linecap="round"/>
<polyline points="538.2,214.8 540.4,228.2" fill="none" stroke="#faf080" stroke-width="1.5" stroke-opacity="0.95" stroke-linejoin="round" stroke-linecap="round"/>
<polyline points="540.4,228.2 541.9,241.6" fill="none" stroke="#f0c040" stroke-width="1.5" stroke-opacity="0.95" stroke-linejoin="round" stroke-linecap="round"/>
<polyline points="541.9,241.6 545.0,255.0" fill="none" stroke="#b82818" stroke-width="1.5" stroke-opacity="0.95" stroke-linejoin="round" stroke-linecap="round"/>
<polyline points="545.0,255.0 542.8,242.1" fill="none" stroke="#a02818" stroke-width="1.0" stroke-opacity="0.75" stroke-linejoin="round" stroke-linecap="round"/>
<polyline points="542.8,242.1 542.1,229.2" fill="none" stroke="#f0d070" stroke-width="1.0" stroke-opacity="0.75" stroke-linejoin="round" stroke-linecap="round"/>
<polyline points="542.1,229.2 538.0,216.2" fill="none" stroke="#eec060" stroke-width="1.0" stroke-opacity="0.75" stroke-linejoin="round" stroke-linecap="round"/>
<polyline points="538.0,216.2 537.1,203.3" fill="none" stroke="#f8ec98" stroke-width="1.0" stroke-opacity="0.75" stroke-linejoin="round" stroke-linecap="round"/>
<polyline points="537.1,203.3 535.7,190.4" fill="none" stroke="#f0d070" stroke-width="1.0" stroke-opacity="0.75" stroke-linejoin="round" stroke-linecap="round"/>
<polyline points="535.7,190.4 533.8,177.5" fill="none" stroke="#f0d070" stroke-width="1.0" stroke-opacity="0.75" stroke-linejoin="round" stroke-linecap="round"/>
<polyline points="533.8,177.5 530.6,164.6" fill="none" stroke="#eec060" stroke-width="1.0" stroke-opacity="0.75" stroke-linejoin="round" stroke-linecap="round"/>
<polyline points="530.6,164.6 528.6,151.7" fill="none" stroke="#f8ec98" stroke-width="1.0" stroke-opacity="0.75" stroke-linejoin="round" stroke-linecap="round"/>
<polyline points="528.6,151.7 527.0,138.8" fill="none" stroke="#eec060" stroke-width="1.0" stroke-opacity="0.75" stroke-linejoin="round" stroke-linecap="round"/>
<polyline points="527.0,138.8 525.7,125.8" fill="none" stroke="#f8ec98" stroke-width="1.0" stroke-opacity="0.75" stroke-linejoin="round" stroke-linecap="round"/>
<polyline points="525.7,125.8 522.0,112.9" fill="none" stroke="#eec060" stroke-width="1.0" stroke-opacity="0.75" stroke-linejoin="round" stroke-linecap="round"/>
<polyline points="522.0,112.9 521.0,100.0" fill="none" stroke="#a02818" stroke-width="1.0" stroke-opacity="0.75" stroke-linejoin="round" stroke-linecap="round"/>
<polyline points="521.0,100.0 522.5,112.8" fill="none" stroke="#b82818" stroke-width="1.5" stroke-opacity="0.95" stroke-linejoin="round" stroke-linecap="round"/>
<polyline points="522.5,112.8 526.2,125.7" fill="none" stroke="#e08038" stroke-width="1.5" stroke-opacity="0.95" stroke-linejoin="round" stroke-linecap="round"/>
<polyline points="526.2,125.7 528.2,138.5" fill="none" stroke="#f0c040" stroke-width="1.5" stroke-opacity="0.95" stroke-linejoin="round" stroke-linecap="round"/>
<polyline points="528.2,138.5 530.7,151.3" fill="none" stroke="#faf080" stroke-width="1.5" stroke-opacity="0.95" stroke-linejoin="round" stroke-linecap="round"/>
<polyline points="530.7,151.3 533.3,164.2" fill="none" stroke="#faf080" stroke-width="1.5" stroke-opacity="0.95" stroke-linejoin="round" stroke-linecap="round"/>
<polyline points="533.3,164.2 537.6,177.0" fill="none" stroke="#f2dc30" stroke-width="1.5" stroke-opacity="0.95" stroke-linejoin="round" stroke-linecap="round"/>
<polyline points="537.6,177.0 538.8,189.8" fill="none" stroke="#f8ec50" stroke-width="1.5" stroke-opacity="0.95" stroke-linejoin="round" stroke-linecap="round"/>
<polyline points="538.8,189.8 541.7,202.7" fill="none" stroke="#faf080" stroke-width="1.5" stroke-opacity="0.95" stroke-linejoin="round" stroke-linecap="round"/>
<polyline points="541.7,202.7 544.7,215.5" fill="none" stroke="#f2dc30" stroke-width="1.5" stroke-opacity="0.95" stroke-linejoin="round" stroke-linecap="round"/>
<polyline points="544.7,215.5 548.6,228.3" fill="none" stroke="#faf080" stroke-width="1.5" stroke-opacity="0.95" stroke-linejoin="round" stroke-linecap="round"/>
<polyline points="548.6,228.3 549.3,241.2" fill="none" stroke="#f0c040" stroke-width="1.5" stroke-opacity="0.95" stroke-linejoin="round" stroke-linecap="round"/>
<polyline points="549.3,241.2 553.0,254.0" fill="none" stroke="#b82818" stroke-width="1.5" stroke-opacity="0.95" stroke-linejoin="round" stroke-linecap="round"/>
<polyline points="553.0,254.0 552.3,241.0" fill="none" stroke="#a02818" stroke-width="1.0" stroke-opacity="0.75" stroke-linejoin="round" stroke-linecap="round"/>
<polyline points="552.3,241.0 549.8,228.0" fill="none" stroke="#f4e090" stroke-width="1.0" stroke-opacity="0.75" stroke-linejoin="round" stroke-linecap="round"/>
<polyline points="549.8,228.0 547.2,215.0" fill="none" stroke="#f8ec98" stroke-width="1.0" stroke-opacity="0.75" stroke-linejoin="round" stroke-linecap="round"/>
<polyline points="547.2,215.0 545.0,202.0" fill="none" stroke="#eec060" stroke-width="1.0" stroke-opacity="0.75" stroke-linejoin="round" stroke-linecap="round"/>
<polyline points="545.0,202.0 542.8,189.0" fill="none" stroke="#eec060" stroke-width="1.0" stroke-opacity="0.75" stroke-linejoin="round" stroke-linecap="round"/>
<polyline points="542.8,189.0 541.2,176.0" fill="none" stroke="#f4e090" stroke-width="1.0" stroke-opacity="0.75" stroke-linejoin="round" stroke-linecap="round"/>
<polyline points="541.2,176.0 540.5,163.0" fill="none" stroke="#f0d070" stroke-width="1.0" stroke-opacity="0.75" stroke-linejoin="round" stroke-linecap="round"/>
<polyline points="540.5,163.0 537.2,150.0" fill="none" stroke="#f8ec98" stroke-width="1.0" stroke-opacity="0.75" stroke-linejoin="round" stroke-linecap="round"/>
<polyline points="537.2,150.0 537.3,137.0" fill="none" stroke="#f8ec98" stroke-width="1.0" stroke-opacity="0.75" stroke-linejoin="round" stroke-linecap="round"/>
<polyline points="537.3,137.0 533.9,124.0" fill="none" stroke="#f8ec98" stroke-width="1.0" stroke-opacity="0.75" stroke-linejoin="round" stroke-linecap="round"/>
<polyline points="533.9,124.0 532.3,111.0" fill="none" stroke="#f8ec98" stroke-width="1.0" stroke-opacity="0.75" stroke-linejoin="round" stroke-linecap="round"/>
<polyline points="532.3,111.0 531.0,98.0" fill="none" stroke="#a02818" stroke-width="1.0" stroke-opacity="0.75" stroke-linejoin="round" stroke-linecap="round"/>
<polyline points="531.0,98.0 533.6,111.2" fill="none" stroke="#b82818" stroke-width="2.0" stroke-opacity="0.95" stroke-linejoin="round" stroke-linecap="round"/>
<polyline points="533.6,111.2 536.6,124.3" fill="none" stroke="#e08038" stroke-width="2.0" stroke-opacity="0.95" stroke-linejoin="round" stroke-linecap="round"/>
<polyline points="536.6,124.3 539.3,137.5" fill="none" stroke="#f0c040" stroke-width="2.0" stroke-opacity="0.95" stroke-linejoin="round" stroke-linecap="round"/>
<polyline points="539.3,137.5 541.6,150.7" fill="none" stroke="#f2dc30" stroke-width="2.0" stroke-opacity="0.95" stroke-linejoin="round" stroke-linecap="round"/>
<polyline points="541.6,150.7 546.3,163.8" fill="none" stroke="#f4e040" stroke-width="2.0" stroke-opacity="0.95" stroke-linejoin="round" stroke-linecap="round"/>
<polyline points="546.3,163.8 547.9,177.0" fill="none" stroke="#f4e040" stroke-width="2.0" stroke-opacity="0.95" stroke-linejoin="round" stroke-linecap="round"/>
<polyline points="547.9,177.0 549.9,190.2" fill="none" stroke="#f8ec50" stroke-width="2.0" stroke-opacity="0.95" stroke-linejoin="round" stroke-linecap="round"/>
<polyline points="549.9,190.2 553.9,203.3" fill="none" stroke="#faf080" stroke-width="2.0" stroke-opacity="0.95" stroke-linejoin="round" stroke-linecap="round"/>
<polyline points="553.9,203.3 555.5,216.5" fill="none" stroke="#f8ec50" stroke-width="2.0" stroke-opacity="0.95" stroke-linejoin="round" stroke-linecap="round"/>
<polyline points="555.5,216.5 559.5,229.7" fill="none" stroke="#f2dc30" stroke-width="2.0" stroke-opacity="0.95" stroke-linejoin="round" stroke-linecap="round"/>
<polyline points="559.5,229.7 562.3,242.8" fill="none" stroke="#f0c040" stroke-width="2.0" stroke-opacity="0.95" stroke-linejoin="round" stroke-linecap="round"/>
<polyline points="562.3,242.8 565.0,256.0" fill="none" stroke="#b82818" stroke-width="2.0" stroke-opacity="0.95" stroke-linejoin="round" stroke-linecap="round"/>
<polyline points="565.0,256.0 561.7,243.8" fill="none" stroke="#a02818" stroke-width="1.0" stroke-opacity="0.75" stroke-linejoin="round" stroke-linecap="round"/>
<polyline points="561.7,243.8 556.4,231.7" fill="none" stroke="#f8ec98" stroke-width="1.0" stroke-opacity="0.75" stroke-linejoin="round" stroke-linecap="round"/>
<polyline points="556.4,231.7 551.7,219.5" fill="none" stroke="#f4e090" stroke-width="1.0" stroke-opacity="0.75" stroke-linejoin="round" stroke-linecap="round"/>
<polyline points="551.7,219.5 546.4,207.3" fill="none" stroke="#f0d070" stroke-width="1.0" stroke-opacity="0.75" stroke-linejoin="round" stroke-linecap="round"/>
<polyline points="546.4,207.3 542.9,195.2" fill="none" stroke="#f4e090" stroke-width="1.0" stroke-opacity="0.75" stroke-linejoin="round" stroke-linecap="round"/>
<polyline points="542.9,195.2 539.6,183.0" fill="none" stroke="#eec060" stroke-width="1.0" stroke-opacity="0.75" stroke-linejoin="round" stroke-linecap="round"/>
<polyline points="539.6,183.0 534.0,170.8" fill="none" stroke="#f4e090" stroke-width="1.0" stroke-opacity="0.75" stroke-linejoin="round" stroke-linecap="round"/>
<polyline points="534.0,170.8 529.2,158.7" fill="none" stroke="#f0d070" stroke-width="1.0" stroke-opacity="0.75" stroke-linejoin="round" stroke-linecap="round"/>
<polyline points="529.2,158.7 524.4,146.5" fill="none" stroke="#eec060" stroke-width="1.0" stroke-opacity="0.75" stroke-linejoin="round" stroke-linecap="round"/>
<polyline points="524.4,146.5 521.4,134.3" fill="none" stroke="#f0d070" stroke-width="1.0" stroke-opacity="0.75" stroke-linejoin="round" stroke-linecap="round"/>
<polyline points="521.4,134.3 517.0,122.2" fill="none" stroke="#eec060" stroke-width="1.0" stroke-opacity="0.75" stroke-linejoin="round" stroke-linecap="round"/>
<polyline points="517.0,122.2 512.0,110.0" fill="none" stroke="#a02818" stroke-width="1.0" stroke-opacity="0.75" stroke-linejoin="round" stroke-linecap="round"/>
<polyline points="512.0,110.0 517.4,122.5" fill="none" stroke="#b82818" stroke-width="1.5" stroke-opacity="0.95" stroke-linejoin="round" stroke-linecap="round"/>
<polyline points="517.4,122.5 523.6,135.0" fill="none" stroke="#e08038" stroke-width="1.5" stroke-opacity="0.95" stroke-linejoin="round" stroke-linecap="round"/>
<polyline points="523.6,135.0 527.7,147.5" fill="none" stroke="#f0c040" stroke-width="1.5" stroke-opacity="0.95" stroke-linejoin="round" stroke-linecap="round"/>
<polyline points="527.7,147.5 532.7,160.0" fill="none" stroke="#f8ec50" stroke-width="1.5" stroke-opacity="0.95" stroke-linejoin="round" stroke-linecap="round"/>
<polyline points="532.7,160.0 538.8,172.5" fill="none" stroke="#faf080" stroke-width="1.5" stroke-opacity="0.95" stroke-linejoin="round" stroke-linecap="round"/>
<polyline points="538.8,172.5 544.0,185.0" fill="none" stroke="#f8ec50" stroke-width="1.5" stroke-opacity="0.95" stroke-linejoin="round" stroke-linecap="round"/>
<polyline points="544.0,185.0 549.7,197.5" fill="none" stroke="#f8ec50" stroke-width="1.5" stroke-opacity="0.95" stroke-linejoin="round" stroke-linecap="round"/>
<polyline points="549.7,197.5 554.9,210.0" fill="none" stroke="#faf080" stroke-width="1.5" stroke-opacity="0.95" stroke-linejoin="round" stroke-linecap="round"/>
<polyline points="554.9,210.0 560.7,222.5" fill="none" stroke="#f2dc30" stroke-width="1.5" stroke-opacity="0.95" stroke-linejoin="round" stroke-linecap="round"/>
<polyline points="560.7,222.5 566.0,235.0" fill="none" stroke="#f4e040" stroke-width="1.5" stroke-opacity="0.95" stroke-linejoin="round" stroke-linecap="round"/>
<polyline points="566.0,235.0 569.9,247.5" fill="none" stroke="#f0c040" stroke-width="1.5" stroke-opacity="0.95" stroke-linejoin="round" stroke-linecap="round"/>
<polyline points="569.9,247.5 576.0,260.0" fill="none" stroke="#b82818" stroke-width="1.5" stroke-opacity="0.95" stroke-linejoin="round" stroke-linecap="round"/>
<polyline points="576.0,260.0 572.9,247.7" fill="none" stroke="#a02818" stroke-width="1.0" stroke-opacity="0.75" stroke-linejoin="round" stroke-linecap="round"/>
<polyline points="572.9,247.7 568.2,235.3" fill="none" stroke="#f0d070" stroke-width="1.0" stroke-opacity="0.75" stroke-linejoin="round" stroke-linecap="round"/>
<polyline points="568.2,235.3 563.2,223.0" fill="none" stroke="#f4e090" stroke-width="1.0" stroke-opacity="0.75" stroke-linejoin="round" stroke-linecap="round"/>
<polyline points="563.2,223.0 558.3,210.7" fill="none" stroke="#f8ec98" stroke-width="1.0" stroke-opacity="0.75" stroke-linejoin="round" stroke-linecap="round"/>
<polyline points="558.3,210.7 555.0,198.3" fill="none" stroke="#f4e090" stroke-width="1.0" stroke-opacity="0.75" stroke-linejoin="round" stroke-linecap="round"/>
<polyline points="555.0,198.3 550.1,186.0" fill="none" stroke="#eec060" stroke-width="1.0" stroke-opacity="0.75" stroke-linejoin="round" stroke-linecap="round"/>
<polyline points="550.1,186.0 547.0,173.7" fill="none" stroke="#f4e090" stroke-width="1.0" stroke-opacity="0.75" stroke-linejoin="round" stroke-linecap="round"/>
<polyline points="547.0,173.7 542.5,161.3" fill="none" stroke="#f8ec98" stroke-width="1.0" stroke-opacity="0.75" stroke-linejoin="round" stroke-linecap="round"/>
<polyline points="542.5,161.3 537.4,149.0" fill="none" stroke="#f0d070" stroke-width="1.0" stroke-opacity="0.75" stroke-linejoin="round" stroke-linecap="round"/>
<polyline points="537.4,149.0 534.6,136.7" fill="none" stroke="#f8ec98" stroke-width="1.0" stroke-opacity="0.75" stroke-linejoin="round" stroke-linecap="round"/>
<polyline points="534.6,136.7 528.2,124.3" fill="none" stroke="#eec060" stroke-width="1.0" stroke-opacity="0.75" stroke-linejoin="round" stroke-linecap="round"/>
<polyline points="528.2,124.3 525.0,112.0" fill="none" stroke="#a02818" stroke-width="1.0" stroke-opacity="0.75" stroke-linejoin="round" stroke-linecap="round"/>
<polyline points="525.0,112.0 530.6,122.7" fill="none" stroke="#b82818" stroke-width="1.5" stroke-opacity="0.95" stroke-linejoin="round" stroke-linecap="round"/>
<polyline points="530.6,122.7 533.8,133.3" fill="none" stroke="#e08038" stroke-width="1.5" stroke-opacity="0.95" stroke-linejoin="round" stroke-linecap="round"/>
<polyline points="533.8,133.3 540.1,144.0" fill="none" stroke="#f0c040" stroke-width="1.5" stroke-opacity="0.95" stroke-linejoin="round" stroke-linecap="round"/>
<polyline points="540.1,144.0 545.7,154.7" fill="none" stroke="#faf080" stroke-width="1.5" stroke-opacity="0.95" stroke-linejoin="round" stroke-linecap="round"/>
<polyline points="545.7,154.7 550.3,165.3" fill="none" stroke="#faf080" stroke-width="1.5" stroke-opacity="0.95" stroke-linejoin="round" stroke-linecap="round"/>
<polyline points="550.3,165.3 555.1,176.0" fill="none" stroke="#faf080" stroke-width="1.5" stroke-opacity="0.95" stroke-linejoin="round" stroke-linecap="round"/>
<polyline points="555.1,176.0 559.4,186.7" fill="none" stroke="#f4e040" stroke-width="1.5" stroke-opacity="0.95" stroke-linejoin="round" stroke-linecap="round"/>
<polyline points="559.4,186.7 563.6,197.3" fill="none" stroke="#f8ec50" stroke-width="1.5" stroke-opacity="0.95" stroke-linejoin="round" stroke-linecap="round"/>
<polyline points="563.6,197.3 569.9,208.0" fill="none" stroke="#f8ec50" stroke-width="1.5" stroke-opacity="0.95" stroke-linejoin="round" stroke-linecap="round"/>
<polyline points="569.9,208.0 573.8,218.7" fill="none" stroke="#f8ec50" stroke-width="1.5" stroke-opacity="0.95" stroke-linejoin="round" stroke-linecap="round"/>
<polyline points="573.8,218.7 579.8,229.3" fill="none" stroke="#f0c040" stroke-width="1.5" stroke-opacity="0.95" stroke-linejoin="round" stroke-linecap="round"/>
<polyline points="579.8,229.3 584.0,240.0" fill="none" stroke="#b82818" stroke-width="1.5" stroke-opacity="0.95" stroke-linejoin="round" stroke-linecap="round"/>
<polyline points="584.0,240.0 579.0,229.0" fill="none" stroke="#a02818" stroke-width="1.0" stroke-opacity="0.75" stroke-linejoin="round" stroke-linecap="round"/>
<polyline points="579.0,229.0 576.6,218.0" fill="none" stroke="#f0d070" stroke-width="1.0" stroke-opacity="0.75" stroke-linejoin="round" stroke-linecap="round"/>
<polyline points="576.6,218.0 572.4,207.0" fill="none" stroke="#f4e090" stroke-width="1.0" stroke-opacity="0.75" stroke-linejoin="round" stroke-linecap="round"/>
<polyline points="572.4,207.0 569.0,196.0" fill="none" stroke="#f8ec98" stroke-width="1.0" stroke-opacity="0.75" stroke-linejoin="round" stroke-linecap="round"/>
<polyline points="569.0,196.0 565.1,185.0" fill="none" stroke="#f4e090" stroke-width="1.0" stroke-opacity="0.75" stroke-linejoin="round" stroke-linecap="round"/>
<polyline points="565.1,185.0 561.2,174.0" fill="none" stroke="#f4e090" stroke-width="1.0" stroke-opacity="0.75" stroke-linejoin="round" stroke-linecap="round"/>
<polyline points="561.2,174.0 557.1,163.0" fill="none" stroke="#f0d070" stroke-width="1.0" stroke-opacity="0.75" stroke-linejoin="round" stroke-linecap="round"/>
<polyline points="557.1,163.0 554.4,152.0" fill="none" stroke="#eec060" stroke-width="1.0" stroke-opacity="0.75" stroke-linejoin="round" stroke-linecap="round"/>
<polyline points="554.4,152.0 548.7,141.0" fill="none" stroke="#f4e090" stroke-width="1.0" stroke-opacity="0.75" stroke-linejoin="round" stroke-linecap="round"/>
<polyline points="548.7,141.0 545.8,130.0" fill="none" stroke="#eec060" stroke-width="1.0" stroke-opacity="0.75" stroke-linejoin="round" stroke-linecap="round"/>
<polyline points="545.8,130.0 540.7,119.0" fill="none" stroke="#f4e090" stroke-width="1.0" stroke-opacity="0.75" stroke-linejoin="round" stroke-linecap="round"/>
<polyline points="540.7,119.0 538.0,108.0" fill="none" stroke="#a02818" stroke-width="1.0" stroke-opacity="0.75" stroke-linejoin="round" stroke-linecap="round"/>
<polyline points="538.0,108.0 543.1,121.5" fill="none" stroke="#b82818" stroke-width="2.0" stroke-opacity="0.95" stroke-linejoin="round" stroke-linecap="round"/>
<polyline points="543.1,121.5 546.6,135.0" fill="none" stroke="#e08038" stroke-width="2.0" stroke-opacity="0.95" stroke-linejoin="round" stroke-linecap="round"/>
<polyline points="546.6,135.0 551.6,148.5" fill="none" stroke="#f0c040" stroke-width="2.0" stroke-opacity="0.95" stroke-linejoin="round" stroke-linecap="round"/>
<polyline points="551.6,148.5 556.8,162.0" fill="none" stroke="#f8ec50" stroke-width="2.0" stroke-opacity="0.95" stroke-linejoin="round" stroke-linecap="round"/>
<polyline points="556.8,162.0 559.4,175.5" fill="none" stroke="#f8ec50" stroke-width="2.0" stroke-opacity="0.95" stroke-linejoin="round" stroke-linecap="round"/>
<polyline points="559.4,175.5 565.6,189.0" fill="none" stroke="#f4e040" stroke-width="2.0" stroke-opacity="0.95" stroke-linejoin="round" stroke-linecap="round"/>
<polyline points="565.6,189.0 570.5,202.5" fill="none" stroke="#faf080" stroke-width="2.0" stroke-opacity="0.95" stroke-linejoin="round" stroke-linecap="round"/>
<polyline points="570.5,202.5 574.4,216.0" fill="none" stroke="#f8ec50" stroke-width="2.0" stroke-opacity="0.95" stroke-linejoin="round" stroke-linecap="round"/>
<polyline points="574.4,216.0 579.3,229.5" fill="none" stroke="#f4e040" stroke-width="2.0" stroke-opacity="0.95" stroke-linejoin="round" stroke-linecap="round"/>
<polyline points="579.3,229.5 583.0,243.0" fill="none" stroke="#f8ec50" stroke-width="2.0" stroke-opacity="0.95" stroke-linejoin="round" stroke-linecap="round"/>
<polyline points="583.0,243.0 588.3,256.5" fill="none" stroke="#f0c040" stroke-width="2.0" stroke-opacity="0.95" stroke-linejoin="round" stroke-linecap="round"/>
<polyline points="588.3,256.5 592.0,270.0" fill="none" stroke="#b82818" stroke-width="2.0" stroke-opacity="0.95" stroke-linejoin="round" stroke-linecap="round"/>
<polyline points="592.0,270.0 585.0,257.5" fill="none" stroke="#a02818" stroke-width="1.0" stroke-opacity="0.75" stroke-linejoin="round" stroke-linecap="round"/>
<polyline points="585.0,257.5 579.6,245.0" fill="none" stroke="#eec060" stroke-width="1.0" stroke-opacity="0.75" stroke-linejoin="round" stroke-linecap="round"/>
<polyline points="579.6,245.0 574.0,232.5" fill="none" stroke="#f0d070" stroke-width="1.0" stroke-opacity="0.75" stroke-linejoin="round" stroke-linecap="round"/>
<polyline points="574.0,232.5 567.5,220.0" fill="none" stroke="#f0d070" stroke-width="1.0" stroke-opacity="0.75" stroke-linejoin="round" stroke-linecap="round"/>
<polyline points="567.5,220.0 560.7,207.5" fill="none" stroke="#f8ec98" stroke-width="1.0" stroke-opacity="0.75" stroke-linejoin="round" stroke-linecap="round"/>
<polyline points="560.7,207.5 555.0,195.0" fill="none" stroke="#f0d070" stroke-width="1.0" stroke-opacity="0.75" stroke-linejoin="round" stroke-linecap="round"/>
<polyline points="555.0,195.0 549.0,182.5" fill="none" stroke="#f0d070" stroke-width="1.0" stroke-opacity="0.75" stroke-linejoin="round" stroke-linecap="round"/>
<polyline points="549.0,182.5 543.3,170.0" fill="none" stroke="#f8ec98" stroke-width="1.0" stroke-opacity="0.75" stroke-linejoin="round" stroke-linecap="round"/>
<polyline points="543.3,170.0 535.6,157.5" fill="none" stroke="#eec060" stroke-width="1.0" stroke-opacity="0.75" stroke-linejoin="round" stroke-linecap="round"/>
<polyline points="535.6,157.5 530.5,145.0" fill="none" stroke="#f4e090" stroke-width="1.0" stroke-opacity="0.75" stroke-linejoin="round" stroke-linecap="round"/>
<polyline points="530.5,145.0 523.6,132.5" fill="none" stroke="#eec060" stroke-width="1.0" stroke-opacity="0.75" stroke-linejoin="round" stroke-linecap="round"/>
<polyline points="523.6,132.5 518.0,120.0" fill="none" stroke="#a02818" stroke-width="1.0" stroke-opacity="0.75" stroke-linejoin="round" stroke-linecap="round"/>
<polyline points="518.0,120.0 524.7,135.0" fill="none" stroke="#b82818" stroke-width="1.5" stroke-opacity="0.95" stroke-linejoin="round" stroke-linecap="round"/>
<polyline points="524.7,135.0 531.7,150.0" fill="none" stroke="#e08038" stroke-width="1.5" stroke-opacity="0.95" stroke-linejoin="round" stroke-linecap="round"/>
<polyline points="531.7,150.0 538.4,165.0" fill="none" stroke="#f0c040" stroke-width="1.5" stroke-opacity="0.95" stroke-linejoin="round" stroke-linecap="round"/>
<polyline points="538.4,165.0 546.4,180.0" fill="none" stroke="#f8ec50" stroke-width="1.5" stroke-opacity="0.95" stroke-linejoin="round" stroke-linecap="round"/>
<polyline points="546.4,180.0 552.6,195.0" fill="none" stroke="#faf080" stroke-width="1.5" stroke-opacity="0.95" stroke-linejoin="round" stroke-linecap="round"/>
<polyline points="552.6,195.0 559.9,210.0" fill="none" stroke="#f4e040" stroke-width="1.5" stroke-opacity="0.95" stroke-linejoin="round" stroke-linecap="round"/>
<polyline points="559.9,210.0 566.9,225.0" fill="none" stroke="#faf080" stroke-width="1.5" stroke-opacity="0.95" stroke-linejoin="round" stroke-linecap="round"/>
<polyline points="566.9,225.0 572.1,240.0" fill="none" stroke="#faf080" stroke-width="1.5" stroke-opacity="0.95" stroke-linejoin="round" stroke-linecap="round"/>
<polyline points="572.1,240.0 579.6,255.0" fill="none" stroke="#f2dc30" stroke-width="1.5" stroke-opacity="0.95" stroke-linejoin="round" stroke-linecap="round"/>
<polyline points="579.6,255.0 587.4,270.0" fill="none" stroke="#f4e040" stroke-width="1.5" stroke-opacity="0.95" stroke-linejoin="round" stroke-linecap="round"/>
<polyline points="587.4,270.0 594.0,285.0" fill="none" stroke="#f0c040" stroke-width="1.5" stroke-opacity="0.95" stroke-linejoin="round" stroke-linecap="round"/>
<polyline points="594.0,285.0 600.0,300.0" fill="none" stroke="#b82818" stroke-width="1.5" stroke-opacity="0.95" stroke-linejoin="round" stroke-linecap="round"/>
<polyline points="600.0,300.0 595.8,285.2" fill="none" stroke="#a02818" stroke-width="1.0" stroke-opacity="0.75" stroke-linejoin="round" stroke-linecap="round"/>
<polyline points="595.8,285.2 590.7,270.3" fill="none" stroke="#f8ec98" stroke-width="1.0" stroke-opacity="0.75" stroke-linejoin="round" stroke-linecap="round"/>
<polyline points="590.7,270.3 585.6,255.5" fill="none" stroke="#f4e090" stroke-width="1.0" stroke-opacity="0.75" stroke-linejoin="round" stroke-linecap="round"/>
<polyline points="585.6,255.5 581.2,240.7" fill="none" stroke="#f0d070" stroke-width="1.0" stroke-opacity="0.75" stroke-linejoin="round" stroke-linecap="round"/>
<polyline points="581.2,240.7 576.2,225.8" fill="none" stroke="#f8ec98" stroke-width="1.0" stroke-opacity="0.75" stroke-linejoin="round" stroke-linecap="round"/>
<polyline points="576.2,225.8 573.2,211.0" fill="none" stroke="#f8ec98" stroke-width="1.0" stroke-opacity="0.75" stroke-linejoin="round" stroke-linecap="round"/>
<polyline points="573.2,211.0 569.0,196.2" fill="none" stroke="#f4e090" stroke-width="1.0" stroke-opacity="0.75" stroke-linejoin="round" stroke-linecap="round"/>
<polyline points="569.0,196.2 563.7,181.3" fill="none" stroke="#f4e090" stroke-width="1.0" stroke-opacity="0.75" stroke-linejoin="round" stroke-linecap="round"/>
<polyline points="563.7,181.3 558.4,166.5" fill="none" stroke="#f4e090" stroke-width="1.0" stroke-opacity="0.75" stroke-linejoin="round" stroke-linecap="round"/>
<polyline points="558.4,166.5 553.6,151.7" fill="none" stroke="#f8ec98" stroke-width="1.0" stroke-opacity="0.75" stroke-linejoin="round" stroke-linecap="round"/>
<polyline points="553.6,151.7 548.7,136.8" fill="none" stroke="#f8ec98" stroke-width="1.0" stroke-opacity="0.75" stroke-linejoin="round" stroke-linecap="round"/>
<polyline points="548.7,136.8 545.0,122.0" fill="none" stroke="#a02818" stroke-width="1.0" stroke-opacity="0.75" stroke-linejoin="round" stroke-linecap="round"/>
<polyline points="545.0,122.0 544.0,131.7" fill="none" stroke="#b82818" stroke-width="1.5" stroke-opacity="0.95" stroke-linejoin="round" stroke-linecap="round"/>
<polyline points="544.0,131.7 543.1,141.3" fill="none" stroke="#e08038" stroke-width="1.5" stroke-opacity="0.95" stroke-linejoin="round" stroke-linecap="round"/>
<polyline points="543.1,141.3 542.8,151.0" fill="none" stroke="#f0c040" stroke-width="1.5" stroke-opacity="0.95" stroke-linejoin="round" stroke-linecap="round"/>
<polyline points="542.8,151.0 543.2,160.7" fill="none" stroke="#f4e040" stroke-width="1.5" stroke-opacity="0.95" stroke-linejoin="round" stroke-linecap="round"/>
<polyline points="543.2,160.7 540.9,170.3" fill="none" stroke="#f4e040" stroke-width="1.5" stroke-opacity="0.95" stroke-linejoin="round" stroke-linecap="round"/>
<polyline points="540.9,170.3 541.6,180.0" fill="none" stroke="#f8ec50" stroke-width="1.5" stroke-opacity="0.95" stroke-linejoin="round" stroke-linecap="round"/>
<polyline points="541.6,180.0 540.8,189.7" fill="none" stroke="#f4e040" stroke-width="1.5" stroke-opacity="0.95" stroke-linejoin="round" stroke-linecap="round"/>
<polyline points="540.8,189.7 539.2,199.3" fill="none" stroke="#f4e040" stroke-width="1.5" stroke-opacity="0.95" stroke-linejoin="round" stroke-linecap="round"/>
<polyline points="539.2,199.3 539.3,209.0" fill="none" stroke="#f2dc30" stroke-width="1.5" stroke-opacity="0.95" stroke-linejoin="round" stroke-linecap="round"/>
<polyline points="539.3,209.0 539.5,218.7" fill="none" stroke="#f2dc30" stroke-width="1.5" stroke-opacity="0.95" stroke-linejoin="round" stroke-linecap="round"/>
<polyline points="539.5,218.7 538.6,228.3" fill="none" stroke="#f0c040" stroke-width="1.5" stroke-opacity="0.95" stroke-linejoin="round" stroke-linecap="round"/>
<polyline points="538.6,228.3 538.0,238.0" fill="none" stroke="#b82818" stroke-width="1.5" stroke-opacity="0.95" stroke-linejoin="round" stroke-linecap="round"/>
<polyline points="538.0,238.0 536.2,228.7" fill="none" stroke="#a02818" stroke-width="1.0" stroke-opacity="0.75" stroke-linejoin="round" stroke-linecap="round"/>
<polyline points="536.2,228.7 537.3,219.3" fill="none" stroke="#eec060" stroke-width="1.0" stroke-opacity="0.75" stroke-linejoin="round" stroke-linecap="round"/>
<polyline points="537.3,219.3 535.4,210.0" fill="none" stroke="#f0d070" stroke-width="1.0" stroke-opacity="0.75" stroke-linejoin="round" stroke-linecap="round"/>
<polyline points="535.4,210.0 534.4,200.7" fill="none" stroke="#eec060" stroke-width="1.0" stroke-opacity="0.75" stroke-linejoin="round" stroke-linecap="round"/>
<polyline points="534.4,200.7 534.5,191.3" fill="none" stroke="#f0d070" stroke-width="1.0" stroke-opacity="0.75" stroke-linejoin="round" stroke-linecap="round"/>
<polyline points="534.5,191.3 535.0,182.0" fill="none" stroke="#f4e090" stroke-width="1.0" stroke-opacity="0.75" stroke-linejoin="round" stroke-linecap="round"/>
<polyline points="535.0,182.0 534.1,172.7" fill="none" stroke="#f8ec98" stroke-width="1.0" stroke-opacity="0.75" stroke-linejoin="round" stroke-linecap="round"/>
<polyline points="534.1,172.7 532.1,163.3" fill="none" stroke="#f0d070" stroke-width="1.0" stroke-opacity="0.75" stroke-linejoin="round" stroke-linecap="round"/>
<polyline points="532.1,163.3 531.2,154.0" fill="none" stroke="#eec060" stroke-width="1.0" stroke-opacity="0.75" stroke-linejoin="round" stroke-linecap="round"/>
<polyline points="531.2,154.0 532.3,144.7" fill="none" stroke="#f0d070" stroke-width="1.0" stroke-opacity="0.75" stroke-linejoin="round" stroke-linecap="round"/>
<polyline points="532.3,144.7 530.8,135.3" fill="none" stroke="#f0d070" stroke-width="1.0" stroke-opacity="0.75" stroke-linejoin="round" stroke-linecap="round"/>
<polyline points="530.8,135.3 530.0,126.0" fill="none" stroke="#a02818" stroke-width="1.0" stroke-opacity="0.75" stroke-linejoin="round" stroke-linecap="round"/>
<polyline points="530.0,126.0 535.4,139.2" fill="none" stroke="#b82818" stroke-width="2.0" stroke-opacity="0.95" stroke-linejoin="round" stroke-linecap="round"/>
<polyline points="535.4,139.2 538.3,152.5" fill="none" stroke="#e08038" stroke-width="2.0" stroke-opacity="0.95" stroke-linejoin="round" stroke-linecap="round"/>
<polyline points="538.3,152.5 544.9,165.8" fill="none" stroke="#f0c040" stroke-width="2.0" stroke-opacity="0.95" stroke-linejoin="round" stroke-linecap="round"/>
<polyline points="544.9,165.8 547.6,179.0" fill="none" stroke="#f8ec50" stroke-width="2.0" stroke-opacity="0.95" stroke-linejoin="round" stroke-linecap="round"/>
<polyline points="547.6,179.0 554.2,192.2" fill="none" stroke="#f4e040" stroke-width="2.0" stroke-opacity="0.95" stroke-linejoin="round" stroke-linecap="round"/>
<polyline points="554.2,192.2 557.9,205.5" fill="none" stroke="#f8ec50" stroke-width="2.0" stroke-opacity="0.95" stroke-linejoin="round" stroke-linecap="round"/>
<polyline points="557.9,205.5 562.3,218.8" fill="none" stroke="#f2dc30" stroke-width="2.0" stroke-opacity="0.95" stroke-linejoin="round" stroke-linecap="round"/>
<polyline points="562.3,218.8 567.5,232.0" fill="none" stroke="#f4e040" stroke-width="2.0" stroke-opacity="0.95" stroke-linejoin="round" stroke-linecap="round"/>
<polyline points="567.5,232.0 573.0,245.2" fill="none" stroke="#f8ec50" stroke-width="2.0" stroke-opacity="0.95" stroke-linejoin="round" stroke-linecap="round"/>
<polyline points="573.0,245.2 576.1,258.5" fill="none" stroke="#f8ec50" stroke-width="2.0" stroke-opacity="0.95" stroke-linejoin="round" stroke-linecap="round"/>
<polyline points="576.1,258.5 580.4,271.8" fill="none" stroke="#f0c040" stroke-width="2.0" stroke-opacity="0.95" stroke-linejoin="round" stroke-linecap="round"/>
<polyline points="580.4,271.8 586.0,285.0" fill="none" stroke="#b82818" stroke-width="2.0" stroke-opacity="0.95" stroke-linejoin="round" stroke-linecap="round"/>
<polyline points="586.0,285.0 583.9,272.9" fill="none" stroke="#a02818" stroke-width="1.0" stroke-opacity="0.75" stroke-linejoin="round" stroke-linecap="round"/>
<polyline points="583.9,272.9 580.0,260.8" fill="none" stroke="#f4e090" stroke-width="1.0" stroke-opacity="0.75" stroke-linejoin="round" stroke-linecap="round"/>
<polyline points="580.0,260.8 576.6,248.8" fill="none" stroke="#f8ec98" stroke-width="1.0" stroke-opacity="0.75" stroke-linejoin="round" stroke-linecap="round"/>
<polyline points="576.6,248.8 572.6,236.7" fill="none" stroke="#f4e090" stroke-width="1.0" stroke-opacity="0.75" stroke-linejoin="round" stroke-linecap="round"/>
<polyline points="572.6,236.7 570.0,224.6" fill="none" stroke="#f8ec98" stroke-width="1.0" stroke-opacity="0.75" stroke-linejoin="round" stroke-linecap="round"/>
<polyline points="570.0,224.6 567.4,212.5" fill="none" stroke="#f0d070" stroke-width="1.0" stroke-opacity="0.75" stroke-linejoin="round" stroke-linecap="round"/>
<polyline points="567.4,212.5 563.3,200.4" fill="none" stroke="#f8ec98" stroke-width="1.0" stroke-opacity="0.75" stroke-linejoin="round" stroke-linecap="round"/>
<polyline points="563.3,200.4 561.4,188.3" fill="none" stroke="#f8ec98" stroke-width="1.0" stroke-opacity="0.75" stroke-linejoin="round" stroke-linecap="round"/>
<polyline points="561.4,188.3 558.7,176.2" fill="none" stroke="#f8ec98" stroke-width="1.0" stroke-opacity="0.75" stroke-linejoin="round" stroke-linecap="round"/>
<polyline points="558.7,176.2 553.2,164.2" fill="none" stroke="#eec060" stroke-width="1.0" stroke-opacity="0.75" stroke-linejoin="round" stroke-linecap="round"/>
<polyline points="553.2,164.2 550.0,152.1" fill="none" stroke="#f4e090" stroke-width="1.0" stroke-opacity="0.75" stroke-linejoin="round" stroke-linecap="round"/>
<polyline points="550.0,152.1 548.0,140.0" fill="none" stroke="#a02818" stroke-width="1.0" stroke-opacity="0.75" stroke-linejoin="round" stroke-linecap="round"/>
<polyline points="548.0,140.0 550.2,149.2" fill="none" stroke="#b82818" stroke-width="1.5" stroke-opacity="0.95" stroke-linejoin="round" stroke-linecap="round"/>
<polyline points="550.2,149.2 549.6,158.3" fill="none" stroke="#e08038" stroke-width="1.5" stroke-opacity="0.95" stroke-linejoin="round" stroke-linecap="round"/>
<polyline points="549.6,158.3 551.8,167.5" fill="none" stroke="#f0c040" stroke-width="1.5" stroke-opacity="0.95" stroke-linejoin="round" stroke-linecap="round"/>
<polyline points="551.8,167.5 552.5,176.7" fill="none" stroke="#f2dc30" stroke-width="1.5" stroke-opacity="0.95" stroke-linejoin="round" stroke-linecap="round"/>
<polyline points="552.5,176.7 553.3,185.8" fill="none" stroke="#faf080" stroke-width="1.5" stroke-opacity="0.95" stroke-linejoin="round" stroke-linecap="round"/>
<polyline points="553.3,185.8 553.8,195.0" fill="none" stroke="#f8ec50" stroke-width="1.5" stroke-opacity="0.95" stroke-linejoin="round" stroke-linecap="round"/>
<polyline points="553.8,195.0 554.6,204.2" fill="none" stroke="#f4e040" stroke-width="1.5" stroke-opacity="0.95" stroke-linejoin="round" stroke-linecap="round"/>
<polyline points="554.6,204.2 554.9,213.3" fill="none" stroke="#f4e040" stroke-width="1.5" stroke-opacity="0.95" stroke-linejoin="round" stroke-linecap="round"/>
<polyline points="554.9,213.3 556.1,222.5" fill="none" stroke="#faf080" stroke-width="1.5" stroke-opacity="0.95" stroke-linejoin="round" stroke-linecap="round"/>
<polyline points="556.1,222.5 557.0,231.7" fill="none" stroke="#f2dc30" stroke-width="1.5" stroke-opacity="0.95" stroke-linejoin="round" stroke-linecap="round"/>
<polyline points="557.0,231.7 559.6,240.8" fill="none" stroke="#f0c040" stroke-width="1.5" stroke-opacity="0.95" stroke-linejoin="round" stroke-linecap="round"/>
<polyline points="559.6,240.8 560.0,250.0" fill="none" stroke="#b82818" stroke-width="1.5" stroke-opacity="0.95" stroke-linejoin="round" stroke-linecap="round"/>
<polyline points="560.0,250.0 556.0,237.8" fill="none" stroke="#a02818" stroke-width="1.0" stroke-opacity="0.75" stroke-linejoin="round" stroke-linecap="round"/>
<polyline points="556.0,237.8 552.0,225.7" fill="none" stroke="#eec060" stroke-width="1.0" stroke-opacity="0.75" stroke-linejoin="round" stroke-linecap="round"/>
<polyline points="552.0,225.7 546.2,213.5" fill="none" stroke="#f4e090" stroke-width="1.0" stroke-opacity="0.75" stroke-linejoin="round" stroke-linecap="round"/>
<polyline points="546.2,213.5 542.2,201.3" fill="none" stroke="#eec060" stroke-width="1.0" stroke-opacity="0.75" stroke-linejoin="round" stroke-linecap="round"/>
<polyline points="542.2,201.3 538.2,189.2" fill="none" stroke="#f4e090" stroke-width="1.0" stroke-opacity="0.75" stroke-linejoin="round" stroke-linecap="round"/>
<polyline points="538.2,189.2 533.3,177.0" fill="none" stroke="#f0d070" stroke-width="1.0" stroke-opacity="0.75" stroke-linejoin="round" stroke-linecap="round"/>
<polyline points="533.3,177.0 529.9,164.8" fill="none" stroke="#eec060" stroke-width="1.0" stroke-opacity="0.75" stroke-linejoin="round" stroke-linecap="round"/>
<polyline points="529.9,164.8 525.6,152.7" fill="none" stroke="#f8ec98" stroke-width="1.0" stroke-opacity="0.75" stroke-linejoin="round" stroke-linecap="round"/>
<polyline points="525.6,152.7 522.9,140.5" fill="none" stroke="#f0d070" stroke-width="1.0" stroke-opacity="0.75" stroke-linejoin="round" stroke-linecap="round"/>
<polyline points="522.9,140.5 517.1,128.3" fill="none" stroke="#f8ec98" stroke-width="1.0" stroke-opacity="0.75" stroke-linejoin="round" stroke-linecap="round"/>
<polyline points="517.1,128.3 512.1,116.2" fill="none" stroke="#eec060" stroke-width="1.0" stroke-opacity="0.75" stroke-linejoin="round" stroke-linecap="round"/>
<polyline points="512.1,116.2 509.0,104.0" fill="none" stroke="#a02818" stroke-width="1.0" stroke-opacity="0.75" stroke-linejoin="round" stroke-linecap="round"/>
<polyline points="509.0,104.0 514.1,117.2" fill="none" stroke="#b82818" stroke-width="1.5" stroke-opacity="0.95" stroke-linejoin="round" stroke-linecap="round"/>
<polyline points="514.1,117.2 518.4,130.3" fill="none" stroke="#e08038" stroke-width="1.5" stroke-opacity="0.95" stroke-linejoin="round" stroke-linecap="round"/>
<polyline points="518.4,130.3 524.3,143.5" fill="none" stroke="#f0c040" stroke-width="1.5" stroke-opacity="0.95" stroke-linejoin="round" stroke-linecap="round"/>
<polyline points="524.3,143.5 528.1,156.7" fill="none" stroke="#f8ec50" stroke-width="1.5" stroke-opacity="0.95" stroke-linejoin="round" stroke-linecap="round"/>
<polyline points="528.1,156.7 533.9,169.8" fill="none" stroke="#faf080" stroke-width="1.5" stroke-opacity="0.95" stroke-linejoin="round" stroke-linecap="round"/>
<polyline points="533.9,169.8 538.5,183.0" fill="none" stroke="#f2dc30" stroke-width="1.5" stroke-opacity="0.95" stroke-linejoin="round" stroke-linecap="round"/>
<polyline points="538.5,183.0 544.3,196.2" fill="none" stroke="#faf080" stroke-width="1.5" stroke-opacity="0.95" stroke-linejoin="round" stroke-linecap="round"/>
<polyline points="544.3,196.2 548.6,209.3" fill="none" stroke="#f8ec50" stroke-width="1.5" stroke-opacity="0.95" stroke-linejoin="round" stroke-linecap="round"/>
<polyline points="548.6,209.3 553.6,222.5" fill="none" stroke="#f2dc30" stroke-width="1.5" stroke-opacity="0.95" stroke-linejoin="round" stroke-linecap="round"/>
<polyline points="553.6,222.5 559.4,235.7" fill="none" stroke="#f8ec50" stroke-width="1.5" stroke-opacity="0.95" stroke-linejoin="round" stroke-linecap="round"/>
<polyline points="559.4,235.7 564.3,248.8" fill="none" stroke="#f0c040" stroke-width="1.5" stroke-opacity="0.95" stroke-linejoin="round" stroke-linecap="round"/>
<polyline points="564.3,248.8 570.0,262.0" fill="none" stroke="#b82818" stroke-width="1.5" stroke-opacity="0.95" stroke-linejoin="round" stroke-linecap="round"/>
<polyline points="548.0,122.0 552.0,140.0 556.0,150.0 560.0,165.0 562.0,185.0 565.0,200.0 570.0,215.0 574.0,230.0 580.0,240.0" fill="none" stroke="#d85a30" stroke-width="1" stroke-opacity="0.85" stroke-linejoin="round" stroke-linecap="round"/>
<polyline points="552.0,130.0 560.0,160.0 558.0,170.0 568.0,190.0 575.0,212.0 582.0,225.0 586.0,238.0" fill="none" stroke="#e8a070" stroke-width="1" stroke-opacity="0.8" stroke-linejoin="round" stroke-linecap="round"/>
<polyline points="526.0,180.0 528.0,200.0 530.0,215.0 533.0,235.0 536.0,243.0" fill="none" stroke="#7a2010" stroke-width="1.1" stroke-opacity="0.9" stroke-linejoin="round" stroke-linecap="round"/>
<polyline points="540.0,175.0 541.0,195.0 544.0,215.0 548.0,240.0 550.0,252.0" fill="none" stroke="#5a2010" stroke-width="1.1" stroke-opacity="0.9" stroke-linejoin="round" stroke-linecap="round"/>
<polyline points="600.0,300.0 603.4,318.7 607.5,330.8 609.5,347.0 610.5,353.0 614.5,352.0 611.5,355.0 612.0,365.0 610.5,367.0" fill="none" stroke="#3a1a10" stroke-width="1.2" stroke-opacity="1" stroke-linejoin="round" stroke-linecap="round"/>
<polyline points="600.4,304.5 614.5,351.0 616.0,356.0" fill="none" stroke="#f0e090" stroke-width="1.6" stroke-opacity="0.9" stroke-linejoin="round" stroke-linecap="round"/>
<polyline points="592.0,280.0 598.0,296.0 603.0,312.0" fill="none" stroke="#e09050" stroke-width="1.2" stroke-opacity="0.9" stroke-linejoin="round" stroke-linecap="round"/>
<polyline points="534.0,116.0 541.0,140.0 549.8,163.6 558.5,181.0 564.7,193.5 572.1,217.0 580.0,237.0 590.0,262.0 598.4,284.3" fill="none" stroke="#1c9a1c" stroke-width="1.8" stroke-opacity="1" stroke-linejoin="round" stroke-linecap="round"/>
<text x="540" y="125.3" font-family="Liberation Sans" font-weight="bold" font-size="10.5" fill="#20b030" letter-spacing="0.6">28.361</text>
<text x="647.7" y="267.4" text-anchor="middle" font-family="Liberation Sans" font-weight="bold" font-size="11" fill="#2aa52c">32</text>
<text x="676.6" y="282.5" text-anchor="middle" font-family="Liberation Sans" font-weight="bold" font-size="11" fill="#d02030">29</text>
<text x="611.6" y="283" text-anchor="middle" font-family="Liberation Sans" font-weight="bold" font-size="11" fill="#2aa52c">26</text>
<text x="604.4" y="305.4" text-anchor="middle" font-family="Liberation Sans" font-weight="bold" font-size="11" fill="#2aa52c">16</text>
<text x="627.3" y="307.8" text-anchor="middle" font-family="Liberation Sans" font-weight="bold" font-size="11" fill="#2aa52c">10</text>
<text x="642.9" y="324.7" text-anchor="middle" font-family="Liberation Sans" font-weight="bold" font-size="11" fill="#2aa52c">18</text>
<text x="658.6" y="333.6" text-anchor="middle" font-family="Liberation Sans" font-weight="bold" font-size="11" fill="#2aa52c">21</text>
<text x="612" y="336.2" text-anchor="middle" font-family="Liberation Sans" font-weight="bold" font-size="11" fill="#2aa52c">27</text>
<text x="669.4" y="347.6" text-anchor="middle" font-family="Liberation Sans" font-weight="bold" font-size="11" fill="#2aa52c">15</text>
<text x="592.3" y="351.7" text-anchor="middle" font-family="Liberation Sans" font-weight="bold" font-size="11" fill="#2aa52c">08</text>
<text x="671.8" y="359.6" text-anchor="middle" font-family="Liberation Sans" font-weight="bold" font-size="11" fill="#d02030">20</text>
<text x="500.2" y="391.2" font-family="Liberation Sans" font-weight="bold" font-size="11" fill="#000">3D</text>
<text x="519.5" y="391.2" font-family="Liberation Sans" font-weight="bold" font-size="11" fill="#2aa52c">10</text>
<text x="536" y="391.2" font-family="Liberation Sans" font-weight="bold" font-size="11" fill="#2aa52c">18</text>
<text x="552" y="391.2" font-family="Liberation Sans" font-weight="bold" font-size="11" fill="#2aa52c">27</text>
<text x="568.6" y="391.2" font-family="Liberation Sans" font-weight="bold" font-size="11" fill="#2aa52c">16</text>
<text x="585" y="391.2" font-family="Liberation Sans" font-weight="bold" font-size="11" fill="#2aa52c">21</text>
<text x="602.3" y="391.2" font-family="Liberation Sans" font-weight="bold" font-size="11" fill="#2aa52c">26</text>
<text x="618.3" y="391.2" font-family="Liberation Sans" font-weight="bold" font-size="11" fill="#2aa52c">08</text>
<text x="634.8" y="391.2" font-family="Liberation Sans" font-weight="bold" font-size="11" fill="#2aa52c">15</text>
<text x="651.6" y="391.2" font-family="Liberation Sans" font-weight="bold" font-size="11" fill="#2aa52c">32</text>
<text x="667.8" y="391.2" font-family="Liberation Sans" font-weight="bold" font-size="11" fill="#d02030">29</text>
<text x="684" y="391.2" font-family="Liberation Sans" font-weight="bold" font-size="11" fill="#d02030">20</text>
<rect x="339" y="397" width="360" height="246" fill="#dcdcdc"/>
<rect x="395" y="398" width="220" height="245" fill="#04c8cd"/>
<rect x="339" y="397" width="360" height="1" fill="#111"/>
<rect x="339" y="397" width="1" height="246" fill="#111"/>
<rect x="698" y="397" width="1" height="246" fill="#111"/>
<line x1="396.5" y1="398" x2="396.5" y2="643" stroke="#1a6a6a" stroke-width="1" stroke-dasharray="3 2"/>
<line x1="422.5" y1="398" x2="422.5" y2="643" stroke="#333" stroke-width="1" stroke-dasharray="2.95 1.97"/>
<line x1="529.5" y1="398" x2="529.5" y2="643" stroke="#333" stroke-width="1" stroke-dasharray="2.95 1.97"/>
<line x1="636.5" y1="398" x2="636.5" y2="643" stroke="#333" stroke-width="1" stroke-dasharray="2.95 1.97"/>
<line x1="339.5" y1="407.5" x2="698" y2="407.5" stroke="#333" stroke-width="1" stroke-dasharray="2.95 1.97"/>
<line x1="339.5" y1="475.5" x2="698" y2="475.5" stroke="#333" stroke-width="1" stroke-dasharray="2.95 1.97"/>
<line x1="339.5" y1="542.5" x2="698" y2="542.5" stroke="#333" stroke-width="1" stroke-dasharray="2.95 1.97"/>
<line x1="339.5" y1="609.5" x2="698" y2="609.5" stroke="#333" stroke-width="1" stroke-dasharray="2.95 1.97"/>
<line x1="339.5" y1="441.5" x2="698" y2="441.5" stroke="#3a3a3a" stroke-width="1" stroke-dasharray="14.84 4.95"/>
<line x1="339.5" y1="508.5" x2="698" y2="508.5" stroke="#3a3a3a" stroke-width="1" stroke-dasharray="14.84 4.95"/>
<line x1="339.5" y1="575.5" x2="698" y2="575.5" stroke="#3a3a3a" stroke-width="1" stroke-dasharray="14.84 4.95"/>
<text x="422.5" y="406.3" text-anchor="middle" font-family="Liberation Sans" font-weight="bold" font-size="10" letter-spacing="0.8" fill="#000">11:09</text>
<text x="529.5" y="406.3" text-anchor="middle" font-family="Liberation Sans" font-weight="bold" font-size="10" letter-spacing="0.8" fill="#000">11:10</text>
<text x="636.5" y="406.3" text-anchor="middle" font-family="Liberation Sans" font-weight="bold" font-size="10" letter-spacing="0.8" fill="#000">11:11</text>
<text x="341" y="451" font-family="Liberation Sans" font-weight="bold" font-size="11" fill="#000">30</text>
<text x="341" y="518" font-family="Liberation Sans" font-weight="bold" font-size="11" fill="#000">20</text>
<text x="341" y="585" font-family="Liberation Sans" font-weight="bold" font-size="11" fill="#000">10</text>
<polyline points="340,582.5 376,582.5 377,587 380,588 382,582.5 396,582.5 397,588 399,582.5 461,582.5 462,588 464,582.5 489,582.5 490,588 492,582.5 698,582.5" fill="none" stroke="#20a020" stroke-width="1"/>
<line x1="340" y1="642" x2="346" y2="641.5" stroke="#140000" stroke-width="1.3" stroke-linecap="round"/>
<line x1="346" y1="641.5" x2="352" y2="640" stroke="#170000" stroke-width="1.3" stroke-linecap="round"/>
<line x1="352" y1="640" x2="356" y2="638" stroke="#1c0200" stroke-width="1.3" stroke-linecap="round"/>
<line x1="356" y1="638" x2="359.5" y2="636.7" stroke="#210300" stroke-width="1.3" stroke-linecap="round"/>
<line x1="359.5" y1="636.7" x2="363" y2="636.5" stroke="#230300" stroke-width="1.3" stroke-linecap="round"/>
<line x1="363" y1="636.5" x2="366" y2="631" stroke="#2b0500" stroke-width="1.3" stroke-linecap="round"/>
<line x1="366" y1="631" x2="368.5" y2="622" stroke="#440a00" stroke-width="1.3" stroke-linecap="round"/>
<line x1="368.5" y1="622" x2="371" y2="610" stroke="#7f1107" stroke-width="1.3" stroke-linecap="round"/>
<line x1="371" y1="610" x2="373.5" y2="596" stroke="#b21c12" stroke-width="1.3" stroke-linecap="round"/>
<line x1="373.5" y1="596" x2="376" y2="580" stroke="#dc281e" stroke-width="1.3" stroke-linecap="round"/>
<line x1="376" y1="580" x2="378" y2="563" stroke="#e02c22" stroke-width="1.3" stroke-linecap="round"/>
<line x1="378" y1="563" x2="379.7" y2="546.7" stroke="#e32f25" stroke-width="1.3" stroke-linecap="round"/>
<line x1="379.7" y1="546.7" x2="381.5" y2="530" stroke="#e8472d" stroke-width="1.3" stroke-linecap="round"/>
<line x1="381.5" y1="530" x2="383" y2="513" stroke="#ef7d3a" stroke-width="1.3" stroke-linecap="round"/>
<line x1="383" y1="513" x2="385.5" y2="496" stroke="#f0ad48" stroke-width="1.3" stroke-linecap="round"/>
<line x1="385.5" y1="496" x2="388" y2="480" stroke="#f0d05b" stroke-width="1.3" stroke-linecap="round"/>
<line x1="388" y1="480" x2="390.5" y2="467" stroke="#f0e172" stroke-width="1.3" stroke-linecap="round"/>
<line x1="390.5" y1="467" x2="393" y2="456.7" stroke="#f0ea8c" stroke-width="1.3" stroke-linecap="round"/>
<line x1="393" y1="456.7" x2="396" y2="451.7" stroke="#f0ed9f" stroke-width="1.3" stroke-linecap="round"/>
<polyline points="396.0,452.0 397.9,452.6 403.4,451.9 409.6,442.1 413.6,445.6 418.3,444.8 421.4,441.6 425.4,446.4 430.9,451.9 435.6,443.2 443.4,450.6 448.1,444.0 452.9,441.6 456.0,441.6 463.9,409.4 473.3,434.6 475.6,436.9 480.4,434.6 484.3,438.5 490.6,452.6 494.5,448.7 498.6,433.0 502.6,441.6 508.9,435.4 512.0,437.7 516.7,447.1 523.0,441.6 527.7,431.4 530.0,434.6 534.0,445.6 537.1,447.1 541.9,450.3 545.0,456.6 550.5,469.1 554.4,466.8 559.1,464.4 562.3,467.6 567.0,464.4 571.7,469.1 576.4,456.6 584.3,450.3 588.2,457.4 592.9,450.3 601.0,442.1 605.7,447.1 608.9,446.4 615.1,454.2" fill="none" stroke="#b4f6e4" stroke-width="1.1" stroke-opacity="1" stroke-linejoin="round" stroke-linecap="round"/>
<polyline points="615.1,454.2 621.4,455.0 627.7,450.3 635.6,437.7 641.9,445.6 645.8,448.7 652.9,462.1 659.1,448.7 665.4,458.1 671.7,460.5 678.0,458.9 682.7,472.3 687.4,481.7 697.0,489.6" fill="none" stroke="#f0eca0" stroke-width="2.5" stroke-opacity="1" stroke-linejoin="round" stroke-linecap="round"/>
</svg>
</body></html>
